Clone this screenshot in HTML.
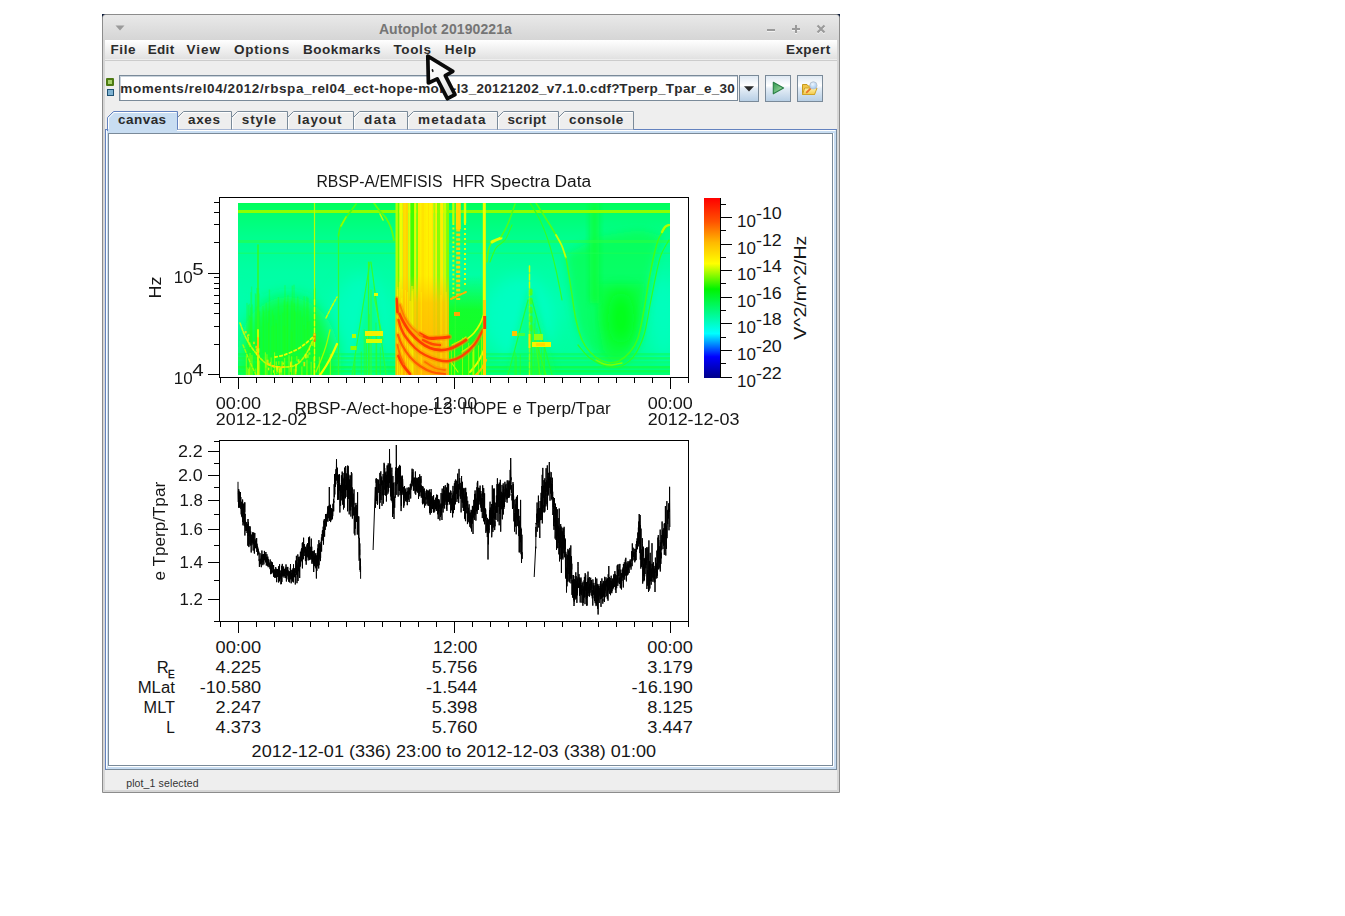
<!DOCTYPE html>
<html><head><meta charset="utf-8"><title>Autoplot 20190221a</title>
<style>
html,body{margin:0;padding:0;background:#fff;}
body{width:1345px;height:916px;position:relative;overflow:hidden;font-family:"Liberation Sans",sans-serif;}
.a{position:absolute;}
.t{position:absolute;white-space:pre;line-height:20px;height:20px;font-family:"Liberation Sans",sans-serif;}
.btn{position:absolute;box-sizing:border-box;border:1px solid #7a8a99;background:linear-gradient(#dfe9f3 0%,#ffffff 38%,#e4edf6 50%,#b8cfe5 100%);}
svg{position:absolute;left:0;top:0;overflow:visible;}
svg text{font-family:"Liberation Sans",sans-serif;}
</style></head><body>

<div class="a" style="left:102px;top:14px;width:4px;height:4px;background:#0a1a3a"></div>
<div class="a" style="left:836px;top:14px;width:4px;height:4px;background:#0a1a3a"></div>
<div class="a" style="left:102px;top:14px;width:738px;height:779px;box-sizing:border-box;border:1px solid #8c8c8c;border-radius:4px 4px 0 0;background:#d6d6d6"></div>
<div class="a" style="left:103px;top:15px;width:736px;height:25px;border-radius:3px 3px 0 0;background:linear-gradient(#e9e9e9,#d5d5d5)"></div>
<div class="a" style="left:105px;top:40px;width:732px;height:750px;background:#eeeeee"></div>
<div class="a" style="left:105px;top:40px;width:732px;height:19px;background:linear-gradient(#ffffff,#e1e1e1)"></div>
<div class="a" style="left:105px;top:60px;width:732px;height:1px;background:#cccccc"></div>
<svg width="1345" height="916" viewBox="0 0 1345 916">
<path d="M115.5 25.5 h9 l-4.5 5z" fill="#9a9a9a"/>
<path d="M116 31 l4.5 0.8 l4.5 -0.8" fill="none" stroke="#f4f4f4" stroke-width="1" opacity="0.0"/>
<g stroke="#f2f2f2" stroke-width="2" fill="none" transform="translate(0,1)"><path d="M767 30h8"/><path d="M792 29h8M796 25v8"/><path d="M817.5 25.5l7 7M824.5 25.5l-7 7"/></g>
<g stroke="#9a9a9a" stroke-width="2" fill="none"><path d="M767 30h8"/><path d="M792 29h8M796 25v8"/><path d="M817.5 25.5l7 7M824.5 25.5l-7 7" stroke-width="2.2"/></g>
</svg>
<div class="t" style="left:378.90px;top:19.37px;font-size:14.00px;letter-spacing:0.083px;font-weight:bold;color:#757575;">Autoplot 20190221a</div>
<div class="t" style="left:110.50px;top:39.54px;font-size:13.50px;letter-spacing:0.587px;font-weight:bold;color:#2b2b2b;">File</div>
<div class="t" style="left:147.70px;top:39.54px;font-size:13.50px;letter-spacing:0.326px;font-weight:bold;color:#2b2b2b;">Edit</div>
<div class="t" style="left:186.40px;top:39.54px;font-size:13.50px;letter-spacing:0.996px;font-weight:bold;color:#2b2b2b;">View</div>
<div class="t" style="left:234.00px;top:39.54px;font-size:13.50px;letter-spacing:0.715px;font-weight:bold;color:#2b2b2b;">Options</div>
<div class="t" style="left:303.10px;top:39.54px;font-size:13.50px;letter-spacing:0.474px;font-weight:bold;color:#2b2b2b;">Bookmarks</div>
<div class="t" style="left:393.50px;top:39.54px;font-size:13.50px;letter-spacing:0.621px;font-weight:bold;color:#2b2b2b;">Tools</div>
<div class="t" style="left:444.80px;top:39.54px;font-size:13.50px;letter-spacing:0.687px;font-weight:bold;color:#2b2b2b;">Help</div>
<div class="t" style="left:786.00px;top:39.54px;font-size:13.50px;letter-spacing:0.431px;font-weight:bold;color:#2b2b2b;">Expert</div>
<div class="a" style="left:106px;top:78px;width:8px;height:8px;box-sizing:border-box;border:2px solid #4d7a12;background:#a6d16a;border-radius:1px"></div>
<div class="a" style="left:107px;top:89px;width:7px;height:7px;box-sizing:border-box;border:1px solid #1f5274;background:#7fb2d2"></div>
<div class="a" style="left:119px;top:75px;width:619px;height:26px;box-sizing:border-box;border:1px solid #7a8a99;background:#fff;box-shadow:inset 1px 1px 0 #c9d3dc"></div>
<div class="t" style="left:120.30px;top:78.54px;font-size:13.50px;letter-spacing:0.588px;font-weight:bold;color:#2b2b2b;">moments/rel04/2012/rbspa_</div>
<div class="t" style="left:311.70px;top:78.54px;font-size:13.50px;letter-spacing:0.445px;font-weight:bold;color:#2b2b2b;">rel04_ect-hope-mom-l3_</div>
<div class="t" style="left:476.50px;top:78.54px;font-size:13.50px;letter-spacing:0.298px;font-weight:bold;color:#2b2b2b;">20121202_v7.1.0.cdf?</div>
<div class="t" style="left:619.30px;top:78.54px;font-size:13.50px;letter-spacing:0.260px;font-weight:bold;color:#2b2b2b;">Tperp_Tpar_e_30</div>
<div class="btn" style="left:739px;top:75px;width:20px;height:27px"></div>
<div class="btn" style="left:765px;top:75px;width:26px;height:27px"></div>
<div class="btn" style="left:797px;top:75px;width:26px;height:27px"></div>
<svg width="1345" height="916" viewBox="0 0 1345 916">
<defs><linearGradient id="gplay" x1="0" y1="0" x2="1" y2="1"><stop offset="0" stop-color="#2f9a4f"/><stop offset="1" stop-color="#b5e3b0"/></linearGradient><linearGradient id="gfold" x1="0" y1="0" x2="0" y2="1"><stop offset="0" stop-color="#fff3a8"/><stop offset="1" stop-color="#f3c94a"/></linearGradient><radialGradient id="glens" cx="0.4" cy="0.35" r="0.7"><stop offset="0" stop-color="#eef6ff"/><stop offset="1" stop-color="#9cc6ee"/></radialGradient></defs>
<path d="M744 86.3h10l-5 5.2z" fill="#2a2a2a"/>
<path d="M773.3 82.3 L783.6 88 L773.3 93.8z" fill="url(#gplay)" stroke="#2a8046" stroke-width="1.1" stroke-linejoin="round"/>
<path d="M802.5 84.5h4.5l1.2 1.5h6.3v8.5h-12z" fill="#f1c64a" stroke="#c79a1c" stroke-width="1"/>
<path d="M802.5 94.5l2.2-6.5h12.3l-2.4 6.5z" fill="url(#gfold)" stroke="#cfa326" stroke-width="1"/>
<path d="M811.3 87.8l-4.6 4.6" stroke="#e8742a" stroke-width="1.8" stroke-linecap="round"/>
<circle cx="813.4" cy="85.4" r="3.6" fill="url(#glens)" stroke="#b8c4d2" stroke-width="1"/>
</svg>
<svg width="1345" height="916" viewBox="0 0 1345 916">
<rect x="105.5" y="129.5" width="731" height="640" fill="#c8ddf2" stroke="#6382bf"/>
<path d="M106.5 769.5 H836.5 V130" fill="none" stroke="#7a8a99"/>
<path d="M106.5 768.5 V130.5 H835.5" fill="none" stroke="#ffffff"/>
<rect x="108.5" y="133.5" width="724" height="632" fill="#ffffff" stroke="#7a8a99"/>
<path d="M109.5 765 V134.5 H832" fill="none" stroke="#ffffff" opacity="0"/>
<path d="M108 766.5 H833.5 V133" fill="none" stroke="#ffffff"/>
<path d="M177.5 129.5 V117.5 L183.5 111.5 H231.5 V129.5" fill="#eeeeee" stroke="#7a8a99"/>
<path d="M178.5 129 V118 L184 112.5 H230.5" fill="none" stroke="#ffffff" opacity="0.9"/>
<path d="M231.5 129.5 V117.5 L237.5 111.5 H287.5 V129.5" fill="#eeeeee" stroke="#7a8a99"/>
<path d="M232.5 129 V118 L238 112.5 H286.5" fill="none" stroke="#ffffff" opacity="0.9"/>
<path d="M287.5 129.5 V117.5 L293.5 111.5 H353.5 V129.5" fill="#eeeeee" stroke="#7a8a99"/>
<path d="M288.5 129 V118 L294 112.5 H352.5" fill="none" stroke="#ffffff" opacity="0.9"/>
<path d="M353.5 129.5 V117.5 L359.5 111.5 H407.5 V129.5" fill="#eeeeee" stroke="#7a8a99"/>
<path d="M354.5 129 V118 L360 112.5 H406.5" fill="none" stroke="#ffffff" opacity="0.9"/>
<path d="M407.5 129.5 V117.5 L413.5 111.5 H497.5 V129.5" fill="#eeeeee" stroke="#7a8a99"/>
<path d="M408.5 129 V118 L414 112.5 H496.5" fill="none" stroke="#ffffff" opacity="0.9"/>
<path d="M497.5 129.5 V117.5 L503.5 111.5 H558.5 V129.5" fill="#eeeeee" stroke="#7a8a99"/>
<path d="M498.5 129 V118 L504 112.5 H557.5" fill="none" stroke="#ffffff" opacity="0.9"/>
<path d="M558.5 129.5 V117.5 L564.5 111.5 H633.5 V129.5" fill="#eeeeee" stroke="#7a8a99"/>
<path d="M559.5 129 V118 L565 112.5 H632.5" fill="none" stroke="#ffffff" opacity="0.9"/>
<path d="M107.5 131 V117.5 L113.5 111.5 H177.5 V129.5" fill="#c8ddf2" stroke="#6382bf"/>
<path d="M108.5 131 V118 L114 112.5 H176.5" fill="none" stroke="#ffffff"/>
<rect x="108" y="129" width="69" height="3" fill="#c8ddf2"/>
</svg>
<div class="t" style="left:118.00px;top:110.14px;font-size:13.50px;letter-spacing:0.469px;font-weight:bold;color:#2b2b2b;">canvas</div>
<div class="t" style="left:188.10px;top:110.14px;font-size:13.50px;letter-spacing:0.592px;font-weight:bold;color:#2b2b2b;">axes</div>
<div class="t" style="left:241.80px;top:110.14px;font-size:13.50px;letter-spacing:0.886px;font-weight:bold;color:#2b2b2b;">style</div>
<div class="t" style="left:297.40px;top:110.14px;font-size:13.50px;letter-spacing:0.891px;font-weight:bold;color:#2b2b2b;">layout</div>
<div class="t" style="left:364.10px;top:110.14px;font-size:13.50px;letter-spacing:1.286px;font-weight:bold;color:#2b2b2b;">data</div>
<div class="t" style="left:418.10px;top:110.14px;font-size:13.50px;letter-spacing:1.166px;font-weight:bold;color:#2b2b2b;">metadata</div>
<div class="t" style="left:507.40px;top:110.14px;font-size:13.50px;letter-spacing:0.390px;font-weight:bold;color:#2b2b2b;">script</div>
<div class="t" style="left:569.10px;top:110.14px;font-size:13.50px;letter-spacing:0.541px;font-weight:bold;color:#2b2b2b;">console</div>
<div class="t" style="left:126.20px;top:772.53px;font-size:10.50px;letter-spacing:0.124px;font-weight:normal;color:#333;">plot_1 selected</div>
<svg width="1345" height="916" viewBox="0 0 1345 916">
<defs>
<clipPath id="spc"><rect x="238" y="203" width="432" height="172"/></clipPath>
<clipPath id="band2c"><rect x="395.5" y="203" width="90" height="172"/></clipPath>
<filter id="b8" x="-50%" y="-50%" width="200%" height="200%"><feGaussianBlur stdDeviation="8"/></filter>
<filter id="b5" x="-50%" y="-50%" width="200%" height="200%"><feGaussianBlur stdDeviation="5"/></filter>
<filter id="b3" x="-50%" y="-50%" width="200%" height="200%"><feGaussianBlur stdDeviation="3"/></filter>
<filter id="b1" x="-50%" y="-50%" width="200%" height="200%"><feGaussianBlur stdDeviation="0.6"/></filter>
<linearGradient id="spbg" x1="0" y1="203" x2="0" y2="375" gradientUnits="userSpaceOnUse"><stop offset="0" stop-color="#00ff58"/><stop offset="0.07" stop-color="#00ff74"/><stop offset="0.2" stop-color="#00ff8e"/><stop offset="0.4" stop-color="#00ffa4"/><stop offset="0.6" stop-color="#00ffac"/><stop offset="0.86" stop-color="#00ffa0"/><stop offset="1" stop-color="#00ff74"/></linearGradient>
<linearGradient id="bandv" x1="0" y1="203" x2="0" y2="375" gradientUnits="userSpaceOnUse"><stop offset="0" stop-color="#ffc800" stop-opacity="0"/><stop offset="0.42" stop-color="#ffc800" stop-opacity="0.04"/><stop offset="0.58" stop-color="#ffc000" stop-opacity="0.75"/><stop offset="1" stop-color="#ffb000" stop-opacity="0.9"/></linearGradient>
<linearGradient id="gzone" x1="0" y1="203" x2="0" y2="375" gradientUnits="userSpaceOnUse"><stop offset="0" stop-color="#14ff20" stop-opacity="0"/><stop offset="0.42" stop-color="#14ff20" stop-opacity="0"/><stop offset="0.62" stop-color="#14ff20" stop-opacity="0.9"/><stop offset="1" stop-color="#18ff18" stop-opacity="1"/></linearGradient>
</defs>
<g clip-path="url(#spc)">
<rect x="238" y="203" width="432" height="172" fill="url(#spbg)"/>
<g filter="url(#b8)">
<ellipse cx="362" cy="325" rx="30" ry="50" fill="#00ffc0" opacity="0.9"/>
<ellipse cx="520" cy="318" rx="36" ry="42" fill="#00ffc4" opacity="0.9"/>
<ellipse cx="664" cy="318" rx="14" ry="42" fill="#00ffc0" opacity="0.9"/>
<ellipse cx="238" cy="325" rx="8" ry="38" fill="#00ffb0" opacity="0.7"/>
<ellipse cx="288" cy="355" rx="50" ry="58" fill="#10ff28" opacity="0.8"/>
<ellipse cx="330" cy="365" rx="12" ry="30" fill="#10ff30" opacity="0.5"/>
</g>
<path d="M566 255 L571 295 L577 325 L586 347 L600 360 L612 364 L624 362 L634 352 L641 335 L646 310 L650 282 L656 255 L662 236 L640 230 L600 236Z" fill="#0cff3c" opacity="0.6" filter="url(#b5)"/>
<path d="M596 284 L598 320 L603 350 L612 362 L624 360 L633 348 L639 325 L643 300 L645 284Z" fill="#08ff28" opacity="0.5" filter="url(#b5)"/>
<ellipse cx="621" cy="318" rx="13" ry="27" fill="#04ff0c" opacity="0.85" filter="url(#b8)"/>
<rect x="590" y="203" width="9" height="100" fill="#0cff38" opacity="0.85" filter="url(#b3)"/>
<rect x="268.7" y="289.5" width="1.4" height="85.5" fill="#20ff18" opacity="0.3"/>
<rect x="291.6" y="285.6" width="1.4" height="89.4" fill="#20ff18" opacity="0.3"/>
<rect x="283.5" y="300.3" width="1.4" height="74.7" fill="#20ff18" opacity="0.3"/>
<rect x="250.1" y="307.4" width="1.4" height="67.6" fill="#20ff18" opacity="0.3"/>
<rect x="248.6" y="303.7" width="1.4" height="71.3" fill="#20ff18" opacity="0.3"/>
<rect x="250.9" y="286.5" width="1.4" height="88.5" fill="#20ff18" opacity="0.3"/>
<rect x="275.7" y="323.3" width="1.4" height="51.7" fill="#20ff18" opacity="0.3"/>
<rect x="254.7" y="293.2" width="1.4" height="81.8" fill="#20ff18" opacity="0.3"/>
<rect x="289.9" y="329.4" width="1.4" height="45.6" fill="#20ff18" opacity="0.3"/>
<rect x="286.4" y="301.8" width="1.4" height="73.2" fill="#20ff18" opacity="0.3"/>
<rect x="314.3" y="284.3" width="1.4" height="90.7" fill="#20ff18" opacity="0.3"/>
<rect x="306.1" y="296.5" width="1.4" height="78.5" fill="#20ff18" opacity="0.3"/>
<rect x="256.1" y="287.9" width="1.4" height="87.1" fill="#20ff18" opacity="0.3"/>
<rect x="267.6" y="322.8" width="1.4" height="52.2" fill="#20ff18" opacity="0.3"/>
<rect x="258.7" y="311.1" width="1.4" height="63.9" fill="#20ff18" opacity="0.3"/>
<rect x="290.7" y="300.6" width="1.4" height="74.4" fill="#20ff18" opacity="0.3"/>
<rect x="284.3" y="285.1" width="1.4" height="89.9" fill="#20ff18" opacity="0.3"/>
<rect x="250.2" y="292.3" width="1.4" height="82.7" fill="#20ff18" opacity="0.3"/>
<rect x="293.6" y="303.4" width="1.4" height="71.6" fill="#20ff18" opacity="0.3"/>
<rect x="268.0" y="311.3" width="1.4" height="63.7" fill="#20ff18" opacity="0.3"/>
<rect x="277.7" y="297.0" width="1.4" height="78.0" fill="#20ff18" opacity="0.3"/>
<rect x="301.6" y="316.9" width="1.4" height="58.1" fill="#20ff18" opacity="0.3"/>
<rect x="263.1" y="310.7" width="1.4" height="64.3" fill="#20ff18" opacity="0.3"/>
<rect x="282.8" y="325.8" width="1.4" height="49.2" fill="#20ff18" opacity="0.3"/>
<rect x="297.1" y="296.4" width="1.4" height="78.6" fill="#20ff18" opacity="0.3"/>
<rect x="314.6" y="287.9" width="1.4" height="87.1" fill="#20ff18" opacity="0.3"/>
<rect x="275.3" y="319.9" width="1.4" height="55.1" fill="#20ff18" opacity="0.3"/>
<rect x="256.6" y="306.4" width="1.4" height="68.6" fill="#20ff18" opacity="0.3"/>
<rect x="248.7" y="315.4" width="1.4" height="59.6" fill="#20ff18" opacity="0.3"/>
<rect x="299.5" y="310.7" width="1.4" height="64.3" fill="#20ff18" opacity="0.3"/>
<rect x="307.3" y="297.7" width="1.4" height="77.3" fill="#20ff18" opacity="0.3"/>
<rect x="294.7" y="311.7" width="1.4" height="63.3" fill="#20ff18" opacity="0.3"/>
<rect x="286.6" y="304.8" width="1.4" height="70.2" fill="#20ff18" opacity="0.3"/>
<rect x="304.8" y="329.2" width="1.4" height="45.8" fill="#20ff18" opacity="0.3"/>
<rect x="279.2" y="315.2" width="1.4" height="59.8" fill="#20ff18" opacity="0.3"/>
<rect x="250.2" y="317.1" width="1.4" height="57.9" fill="#20ff18" opacity="0.3"/>
<rect x="291.3" y="331.7" width="1.4" height="43.3" fill="#20ff18" opacity="0.3"/>
<rect x="303.5" y="296.2" width="1.4" height="78.8" fill="#20ff18" opacity="0.3"/>
<rect x="273.0" y="315.4" width="1.4" height="59.6" fill="#20ff18" opacity="0.3"/>
<rect x="247.6" y="305.1" width="1.4" height="69.9" fill="#20ff18" opacity="0.3"/>
<rect x="257.8" y="287.9" width="1.4" height="87.1" fill="#20ff18" opacity="0.3"/>
<rect x="250.1" y="320.4" width="1.4" height="54.6" fill="#20ff18" opacity="0.3"/>
<rect x="255.1" y="294.4" width="1.4" height="80.6" fill="#20ff18" opacity="0.3"/>
<rect x="273.4" y="325.6" width="1.4" height="49.4" fill="#20ff18" opacity="0.3"/>
<rect x="251.6" y="304.5" width="1.4" height="70.5" fill="#20ff18" opacity="0.3"/>
<rect x="284.5" y="326.2" width="1.4" height="48.8" fill="#20ff18" opacity="0.3"/>
<rect x="303.3" y="325.2" width="1.4" height="49.8" fill="#20ff18" opacity="0.3"/>
<rect x="265.5" y="302.8" width="1.4" height="72.2" fill="#20ff18" opacity="0.3"/>
<rect x="271.1" y="326.2" width="1.4" height="48.8" fill="#20ff18" opacity="0.3"/>
<rect x="313.0" y="289.5" width="1.4" height="85.5" fill="#20ff18" opacity="0.3"/>
<rect x="258.3" y="293.6" width="1.4" height="81.4" fill="#20ff18" opacity="0.3"/>
<rect x="262.3" y="306.2" width="1.4" height="68.8" fill="#20ff18" opacity="0.3"/>
<rect x="287.2" y="295.1" width="1.4" height="79.9" fill="#20ff18" opacity="0.3"/>
<rect x="246.3" y="302.9" width="1.4" height="72.1" fill="#20ff18" opacity="0.3"/>
<rect x="271.8" y="310.3" width="1.4" height="64.7" fill="#20ff18" opacity="0.3"/>
<rect x="312.7" y="316.5" width="1.4" height="58.5" fill="#20ff18" opacity="0.3"/>
<rect x="282.1" y="312.9" width="1.4" height="62.1" fill="#20ff18" opacity="0.3"/>
<rect x="293.3" y="284.7" width="1.4" height="90.3" fill="#20ff18" opacity="0.3"/>
<rect x="309.0" y="321.0" width="1.4" height="54.0" fill="#20ff18" opacity="0.3"/>
<rect x="307.2" y="321.9" width="1.4" height="53.1" fill="#20ff18" opacity="0.3"/>
<rect x="238" y="353" width="432" height="2.5" fill="#10ff40" opacity="0.45"/>
<rect x="238" y="357" width="432" height="2.5" fill="#20ff30" opacity="0.45"/>
<rect x="238" y="361" width="432" height="2.5" fill="#10ff50" opacity="0.35"/>
<rect x="238" y="366" width="432" height="2.5" fill="#18ff28" opacity="0.55"/>
<rect x="238" y="370" width="432" height="2.5" fill="#10ff30" opacity="0.55"/>
<rect x="238" y="210" width="432" height="3" fill="#8cff00"/>
<rect x="238" y="240" width="432" height="3" fill="#2cff40" opacity="0.55"/>
<rect x="238" y="252.5" width="432" height="1.5" fill="#20ff50" opacity="0.45"/>
<g fill="none" stroke-linecap="round">
<path d="M258 245V375" stroke="#30ff20" stroke-width="1.5"/>
<path d="M338.5 233V375" stroke="#30ff30" stroke-width="1.2"/>
<path d="M368.5 262V375" stroke="#40ff20" stroke-width="1.2"/>
<path d="M371 290V375" stroke="#50ff20" stroke-width="1"/>
<path d="M314.5 203V300" stroke="#b8ff00" stroke-width="1.2"/>
<path d="M314.5 300V375" stroke="#e0ff00" stroke-width="1.4" stroke-dasharray="5 2"/>
<path d="M314.5 334v7" stroke="#ff7a00" stroke-width="2.2"/>
<path d="M258 330V375" stroke="#d8ff00" stroke-width="1.8"/>
<path d="M258 338V356" stroke="#ffc000" stroke-width="2"/>
<path d="M240.0 323.0 C241.0 325.5 243.5 333.2 246.0 338.0 C248.5 342.8 251.5 347.7 255.0 352.0 C258.5 356.3 262.7 361.5 267.0 364.0 C271.3 366.5 276.2 366.8 281.0 367.0 C285.8 367.2 291.8 367.2 296.0 365.0 C300.2 362.8 303.0 358.5 306.0 354.0 C309.0 349.5 312.7 340.7 314.0 338.0" stroke="#d0ff00" stroke-width="1.6" stroke-dasharray="3 1.6" opacity="0.9"/>
<path d="M275.0 357.0 C276.5 356.7 280.5 356.2 284.0 355.0 C287.5 353.8 292.5 351.8 296.0 350.0 C299.5 348.2 302.2 346.2 305.0 344.0 C307.8 341.8 311.7 338.2 313.0 337.0" stroke="#e8ff00" stroke-width="1.8" stroke-dasharray="2.5 2.5"/>
<path d="M243.0 345.0 C244.2 347.8 247.8 357.0 250.0 362.0 C252.2 367.0 255.0 372.8 256.0 375.0" stroke="#a0ff00" stroke-width="1.4" stroke-dasharray="3 2"/>
<path d="M268.0 364.0 C269.3 364.5 273.3 366.5 276.0 367.0 C278.7 367.5 282.7 367.0 284.0 367.0" stroke="#ffd800" stroke-width="2.2" stroke-dasharray="2 3"/>
</g>
<rect x="269.8" y="361.9" width="1.1" height="2.2" fill="#ffe000" opacity="0.8"/>
<rect x="255.9" y="351.5" width="1.1" height="3.8" fill="#f0ff00" opacity="0.8"/>
<rect x="247.8" y="333.9" width="1.7" height="2.2" fill="#b0ff00" opacity="0.8"/>
<rect x="255.8" y="348.3" width="1.2" height="2.8" fill="#ffe000" opacity="0.8"/>
<rect x="266.4" y="359.7" width="2.2" height="3.4" fill="#ffe000" opacity="0.8"/>
<rect x="276.8" y="367.9" width="1.2" height="4.2" fill="#d8ff00" opacity="0.8"/>
<rect x="296.3" y="356.0" width="1.0" height="4.9" fill="#90ff00" opacity="0.8"/>
<rect x="280.1" y="367.7" width="1.8" height="4.7" fill="#f0ff00" opacity="0.8"/>
<rect x="297.6" y="359.3" width="1.8" height="2.8" fill="#d8ff00" opacity="0.8"/>
<rect x="267.9" y="367.6" width="1.4" height="2.7" fill="#f0ff00" opacity="0.8"/>
<rect x="281.2" y="361.3" width="2.0" height="5.0" fill="#90ff00" opacity="0.8"/>
<rect x="304.8" y="354.2" width="2.0" height="4.2" fill="#f0ff00" opacity="0.8"/>
<rect x="257.2" y="348.3" width="2.2" height="4.4" fill="#d8ff00" opacity="0.8"/>
<rect x="275.9" y="365.7" width="1.8" height="4.9" fill="#f0ff00" opacity="0.8"/>
<rect x="274.0" y="373.0" width="1.1" height="2.3" fill="#b0ff00" opacity="0.8"/>
<rect x="275.7" y="361.5" width="1.2" height="3.9" fill="#b0ff00" opacity="0.8"/>
<rect x="308.4" y="352.4" width="2.0" height="2.3" fill="#b0ff00" opacity="0.8"/>
<rect x="290.2" y="361.5" width="1.9" height="4.3" fill="#ffe000" opacity="0.8"/>
<rect x="276.3" y="369.3" width="1.1" height="4.8" fill="#b0ff00" opacity="0.8"/>
<rect x="294.9" y="369.3" width="1.5" height="4.8" fill="#ffe000" opacity="0.8"/>
<rect x="295.1" y="363.8" width="1.7" height="3.4" fill="#f0ff00" opacity="0.8"/>
<rect x="289.8" y="367.3" width="2.0" height="4.9" fill="#90ff00" opacity="0.8"/>
<rect x="290.0" y="362.5" width="1.0" height="4.4" fill="#f0ff00" opacity="0.8"/>
<rect x="295.2" y="366.8" width="1.6" height="4.8" fill="#d8ff00" opacity="0.8"/>
<rect x="273.0" y="370.2" width="1.0" height="2.6" fill="#f0ff00" opacity="0.8"/>
<rect x="278.1" y="361.2" width="1.4" height="3.6" fill="#90ff00" opacity="0.8"/>
<rect x="303.4" y="361.9" width="1.8" height="4.4" fill="#ffe000" opacity="0.8"/>
<rect x="279.3" y="369.3" width="1.2" height="2.5" fill="#90ff00" opacity="0.8"/>
<rect x="278.8" y="371.6" width="1.0" height="4.4" fill="#90ff00" opacity="0.8"/>
<rect x="253.1" y="341.7" width="1.7" height="2.4" fill="#ffe000" opacity="0.8"/>
<rect x="244.7" y="331.0" width="1.9" height="2.3" fill="#ffe000" opacity="0.8"/>
<rect x="282.6" y="362.5" width="1.2" height="2.1" fill="#f0ff00" opacity="0.8"/>
<rect x="247.4" y="337.0" width="1.5" height="3.8" fill="#d8ff00" opacity="0.8"/>
<rect x="278.4" y="367.0" width="1.2" height="2.8" fill="#90ff00" opacity="0.8"/>
<rect x="278.6" y="368.4" width="1.8" height="4.6" fill="#f0ff00" opacity="0.8"/>
<rect x="311.6" y="341.2" width="2.1" height="4.7" fill="#b0ff00" opacity="0.8"/>
<rect x="255.4" y="345.8" width="1.5" height="2.2" fill="#ffe000" opacity="0.8"/>
<rect x="258.3" y="354.6" width="1.3" height="2.9" fill="#d8ff00" opacity="0.8"/>
<rect x="249.3" y="342.5" width="1.2" height="4.6" fill="#b0ff00" opacity="0.8"/>
<rect x="313.5" y="333.4" width="1.9" height="2.3" fill="#f0ff00" opacity="0.8"/>
<rect x="307.3" y="354.5" width="1.2" height="3.3" fill="#f0ff00" opacity="0.8"/>
<rect x="279.2" y="371.9" width="1.5" height="3.1" fill="#b0ff00" opacity="0.8"/>
<rect x="247.0" y="334.7" width="1.5" height="2.1" fill="#ffe000" opacity="0.8"/>
<rect x="265.2" y="362.8" width="1.4" height="4.9" fill="#90ff00" opacity="0.8"/>
<rect x="248.6" y="342.3" width="1.1" height="2.8" fill="#d8ff00" opacity="0.8"/>
<rect x="308.8" y="348.0" width="1.3" height="2.4" fill="#f0ff00" opacity="0.8"/>
<rect x="281.1" y="368.4" width="1.1" height="6.6" fill="#c0ff00" opacity="0.6"/>
<rect x="318.8" y="356.7" width="1.1" height="18.3" fill="#c0ff00" opacity="0.6"/>
<rect x="255.2" y="368.5" width="1.1" height="6.5" fill="#c0ff00" opacity="0.6"/>
<rect x="295.2" y="364.6" width="1.1" height="10.4" fill="#c0ff00" opacity="0.6"/>
<rect x="249.5" y="353.0" width="1.1" height="22.0" fill="#c0ff00" opacity="0.6"/>
<rect x="306.4" y="359.7" width="1.1" height="15.3" fill="#c0ff00" opacity="0.6"/>
<rect x="247.9" y="368.9" width="1.1" height="6.1" fill="#c0ff00" opacity="0.6"/>
<rect x="301.3" y="366.4" width="1.1" height="8.6" fill="#c0ff00" opacity="0.6"/>
<rect x="249.0" y="367.4" width="1.1" height="7.6" fill="#c0ff00" opacity="0.6"/>
<rect x="247.3" y="367.5" width="1.1" height="7.5" fill="#c0ff00" opacity="0.6"/>
<rect x="284.1" y="358.1" width="1.1" height="16.9" fill="#c0ff00" opacity="0.6"/>
<rect x="293.5" y="368.7" width="1.1" height="6.3" fill="#c0ff00" opacity="0.6"/>
<rect x="266.4" y="354.3" width="1.1" height="20.7" fill="#c0ff00" opacity="0.6"/>
<rect x="291.1" y="356.3" width="1.1" height="18.7" fill="#c0ff00" opacity="0.6"/>
<rect x="251.4" y="354.9" width="1.1" height="20.1" fill="#c0ff00" opacity="0.6"/>
<rect x="245.8" y="355.6" width="1.1" height="19.4" fill="#c0ff00" opacity="0.6"/>
<rect x="270.6" y="357.5" width="1.1" height="17.5" fill="#c0ff00" opacity="0.6"/>
<rect x="313.2" y="357.2" width="1.1" height="17.8" fill="#c0ff00" opacity="0.6"/>
<rect x="288.5" y="355.2" width="1.1" height="19.8" fill="#c0ff00" opacity="0.6"/>
<rect x="274.0" y="352.3" width="1.1" height="22.7" fill="#c0ff00" opacity="0.6"/>
<rect x="264.8" y="352.3" width="1.1" height="22.7" fill="#c0ff00" opacity="0.6"/>
<rect x="310.6" y="361.9" width="1.1" height="13.1" fill="#c0ff00" opacity="0.6"/>
<rect x="259.0" y="360.5" width="1.1" height="14.5" fill="#c0ff00" opacity="0.6"/>
<rect x="329.8" y="353.9" width="1.1" height="21.1" fill="#c0ff00" opacity="0.6"/>
<g fill="none" stroke-linecap="round">
<path d="M320.0 375.0 C321.0 373.5 324.0 369.3 326.0 366.0 C328.0 362.7 330.2 358.7 332.0 355.0 C333.8 351.3 336.2 345.8 337.0 344.0" stroke="#f0ff00" stroke-width="2.2"/>
<path d="M326.0 318.0 C326.8 316.3 329.2 311.5 331.0 308.0 C332.8 304.5 336.0 298.8 337.0 297.0" stroke="#c8ff00" stroke-width="1.5" stroke-dasharray="3 1.5"/>
<path d="M316.0 372.0 C316.8 370.0 319.3 364.3 321.0 360.0 C322.7 355.7 324.5 351.0 326.0 346.0 C327.5 341.0 329.3 332.7 330.0 330.0" stroke="#a0ff00" stroke-width="1.3"/>
<path d="M338.5 236.0 C338.8 234.7 338.9 230.8 340.0 228.0 C341.1 225.2 343.2 221.8 345.0 219.0 C346.8 216.2 349.2 213.5 351.0 211.0 C352.8 208.5 355.2 205.2 356.0 204.0" stroke="#48ff18" stroke-width="1.6"/>
<path d="M374.0 203.0 C374.8 204.2 377.0 207.5 379.0 210.0 C381.0 212.5 384.0 215.0 386.0 218.0 C388.0 221.0 389.7 224.3 391.0 228.0 C392.3 231.7 393.5 238.0 394.0 240.0" stroke="#60ff10" stroke-width="1.8"/>
<path d="M380.0 214.0 L383.0 220.0" stroke="#c0ff00" stroke-width="1.6"/>
<path d="M341.0 226.0 L346.0 217.0" stroke="#90ff00" stroke-width="1.6"/>
<path d="M370 262 L352 375" stroke="#30ff30" stroke-width="1.2"/>
<path d="M371 262 L386 375" stroke="#30ff30" stroke-width="1.2"/>
<path d="M374 296 L383 340" stroke="#50ff20" stroke-width="1.2"/>
</g>
<path d="M369 285 L360 330 L349 375 H389 L380 330 L373 285z" fill="#0cff58" opacity="0.4" filter="url(#b3)"/>
<rect x="379.8" y="347.3" width="1.2" height="27.7" fill="#38ff18" opacity="0.5"/>
<rect x="368.8" y="314.2" width="1.2" height="60.8" fill="#38ff18" opacity="0.5"/>
<rect x="365.4" y="333.4" width="1.2" height="41.6" fill="#38ff18" opacity="0.5"/>
<rect x="375.4" y="322.6" width="1.2" height="52.4" fill="#38ff18" opacity="0.5"/>
<rect x="363.7" y="329.4" width="1.2" height="45.6" fill="#38ff18" opacity="0.5"/>
<rect x="376.0" y="333.4" width="1.2" height="41.6" fill="#38ff18" opacity="0.5"/>
<rect x="365.8" y="336.9" width="1.2" height="38.1" fill="#38ff18" opacity="0.5"/>
<rect x="353.8" y="364.5" width="1.2" height="10.5" fill="#38ff18" opacity="0.5"/>
<rect x="354.4" y="357.3" width="1.2" height="17.7" fill="#38ff18" opacity="0.5"/>
<rect x="360.7" y="351.5" width="1.2" height="23.5" fill="#38ff18" opacity="0.5"/>
<rect x="365" y="331" width="18" height="5" fill="#f4f000"/><rect x="366" y="339" width="16" height="4" fill="#d8ff00"/>
<rect x="374" y="293" width="4" height="3" fill="#e8ff00"/>
<rect x="352" y="334" width="4" height="4" fill="#b0ff00"/><rect x="350.5" y="346" width="6" height="4" fill="#90ff00"/>
<rect x="395.5" y="203" width="2.45" height="172" fill="#b4ff00"/>
<rect x="397.9" y="203" width="1.45" height="172" fill="#60ff00"/>
<rect x="399.3" y="203" width="3.55" height="172" fill="#f0ff00"/>
<rect x="402.8" y="203" width="5.45" height="172" fill="#ffd800"/>
<rect x="408.2" y="203" width="2.45" height="172" fill="#e4ff00"/>
<rect x="410.6" y="203" width="3.55" height="172" fill="#40ff00"/>
<rect x="414.1" y="203" width="2.45" height="172" fill="#e4ff00"/>
<rect x="416.5" y="203" width="1.55" height="172" fill="#78ff00"/>
<rect x="418" y="203" width="8.05" height="172" fill="#ffea00"/>
<rect x="426" y="203" width="7.75" height="172" fill="#fff200"/>
<rect x="433.7" y="203" width="1.55" height="172" fill="#a8ff00"/>
<rect x="435.2" y="203" width="2.05" height="172" fill="#fff000"/>
<rect x="437.2" y="203" width="2.95" height="172" fill="#88ff00"/>
<rect x="440.1" y="203" width="3.55" height="172" fill="#fff200"/>
<rect x="443.6" y="203" width="2.95" height="172" fill="#c8ff00"/>
<rect x="446.5" y="203" width="2.55" height="172" fill="#80ff00"/>
<rect x="404.5" y="203" width="1" height="172" fill="#ffe800" opacity="0.7"/>
<rect x="406.5" y="203" width="1" height="172" fill="#ffcc00" opacity="0.7"/>
<rect x="420.0" y="203" width="1" height="172" fill="#fff400" opacity="0.7"/>
<rect x="422.5" y="203" width="1" height="172" fill="#ffdc00" opacity="0.7"/>
<rect x="424.5" y="203" width="1" height="172" fill="#fff600" opacity="0.7"/>
<rect x="428.0" y="203" width="1" height="172" fill="#ffe000" opacity="0.7"/>
<rect x="430.5" y="203" width="1" height="172" fill="#fff800" opacity="0.7"/>
<rect x="432.0" y="203" width="1" height="172" fill="#ffe400" opacity="0.7"/>
<rect x="441.5" y="203" width="1" height="172" fill="#ffe800" opacity="0.7"/>
<rect x="395.5" y="203" width="53.5" height="172" fill="url(#bandv)"/>
<rect x="401.2" y="298" width="1.1" height="95" fill="#fff200" opacity="0.55"/>
<rect x="440.5" y="295" width="1.1" height="95" fill="#fff200" opacity="0.55"/>
<rect x="411.1" y="286" width="1.1" height="95" fill="#fff200" opacity="0.55"/>
<rect x="411.7" y="291" width="1.1" height="95" fill="#fff200" opacity="0.55"/>
<rect x="404.9" y="290" width="1.1" height="95" fill="#fff200" opacity="0.55"/>
<rect x="410.2" y="301" width="1.1" height="95" fill="#fff200" opacity="0.55"/>
<rect x="445.6" y="292" width="1.1" height="95" fill="#fff200" opacity="0.55"/>
<rect x="409.2" y="301" width="1.1" height="95" fill="#fff200" opacity="0.55"/>
<rect x="412.5" y="289" width="1.1" height="95" fill="#fff200" opacity="0.55"/>
<rect x="397.1" y="289" width="1.1" height="95" fill="#fff200" opacity="0.55"/>
<rect x="420.7" y="292" width="1.1" height="95" fill="#fff200" opacity="0.55"/>
<rect x="407.0" y="292" width="1.1" height="95" fill="#fff200" opacity="0.55"/>
<rect x="397.2" y="287" width="1.1" height="95" fill="#fff200" opacity="0.55"/>
<rect x="401.5" y="289" width="1.1" height="95" fill="#fff200" opacity="0.55"/>
<rect x="399.1" y="282" width="1.1" height="95" fill="#fff200" opacity="0.55"/>
<rect x="412.2" y="286" width="1.1" height="95" fill="#fff200" opacity="0.55"/>
<rect x="449" y="203" width="34" height="172" fill="url(#gzone)"/>
<rect x="455.8" y="203" width="5" height="26" fill="#ffd800"/>
<rect x="452.2" y="203" width="2.4" height="20" fill="#c0ff00"/>
<rect x="463.8" y="203" width="2.4" height="20" fill="#e0ff00"/>
<path d="M453.4 223V300" stroke="#e0ff00" stroke-width="2" stroke-dasharray="2 2.6"/>
<path d="M458.2 229V300" stroke="#ffd000" stroke-width="4" stroke-dasharray="2.6 2"/>
<path d="M465 223V285" stroke="#e8ff00" stroke-width="2" stroke-dasharray="2 3"/>
<path d="M455.2 203V375" stroke="#30ff30" stroke-width="0.8"/>
<g fill="none" stroke-linecap="round">
<path d="M451 299 L466 292" stroke="#ffb000" stroke-width="2" stroke-dasharray="3 1.5"/>
<rect x="454" y="312" width="6" height="4" fill="#ffa800" stroke="none"/>
<path d="M466.0 340.0 C467.3 338.8 471.7 335.7 474.0 333.0 C476.3 330.3 478.3 327.2 480.0 324.0 C481.7 320.8 483.3 315.7 484.0 314.0" stroke="#e0ff00" stroke-width="1.6"/>
<path d="M462.0 352.0 C463.7 350.8 469.0 347.7 472.0 345.0 C475.0 342.3 477.8 339.2 480.0 336.0 C482.2 332.8 484.2 327.7 485.0 326.0" stroke="#c0ff00" stroke-width="1.4"/>
<path d="M470.0 372.0 C471.3 370.3 475.7 365.7 478.0 362.0 C480.3 358.3 483.0 352.0 484.0 350.0" stroke="#e8ff00" stroke-width="2"/>
<path d="M476.0 375.0 C477.0 373.8 480.3 370.5 482.0 368.0 C483.7 365.5 485.3 361.3 486.0 360.0" stroke="#ffc000" stroke-width="2.2"/>
<path d="M452.0 345.0 C453.3 344.3 457.7 342.3 460.0 341.0 C462.3 339.7 465.0 337.7 466.0 337.0" stroke="#d0ff00" stroke-width="1.2"/>
<path d="M451.0 362.0 L458.0 372.0" stroke="#c0ff00" stroke-width="1.2"/>
<path d="M468.7 343.2V375" stroke="#b0ff00" stroke-width="1" opacity="0.7"/>
<path d="M474.0 346.4V375" stroke="#b0ff00" stroke-width="1" opacity="0.7"/>
<path d="M472.9 352.0V375" stroke="#b0ff00" stroke-width="1" opacity="0.7"/>
<path d="M462.5 338.2V375" stroke="#b0ff00" stroke-width="1" opacity="0.7"/>
<path d="M481.5 333.7V375" stroke="#b0ff00" stroke-width="1" opacity="0.7"/>
<path d="M473.2 346.1V375" stroke="#b0ff00" stroke-width="1" opacity="0.7"/>
<path d="M451.4 350.9V375" stroke="#b0ff00" stroke-width="1" opacity="0.7"/>
<path d="M478.5 345.7V375" stroke="#b0ff00" stroke-width="1" opacity="0.7"/>
<path d="M473.5 350.3V375" stroke="#b0ff00" stroke-width="1" opacity="0.7"/>
<path d="M454.5 343.1V375" stroke="#b0ff00" stroke-width="1" opacity="0.7"/>
</g>
<g fill="none" stroke-linecap="round" clip-path="url(#band2c)">
<path d="M396.5 299.0 L397.5 312.0" stroke="#ff8c00" stroke-width="5.8" opacity="0.45"/>
<path d="M399.5 314.0 C400.2 315.5 402.2 320.0 404.0 323.0 C405.8 326.0 407.3 328.8 410.0 332.0 C412.7 335.2 416.7 339.3 420.0 342.0 C423.3 344.7 426.7 346.7 430.0 348.0 C433.3 349.3 436.8 349.8 440.0 350.0 C443.2 350.2 446.0 349.8 449.0 349.0 C452.0 348.2 455.2 346.5 458.0 345.0 C460.8 343.5 464.7 340.8 466.0 340.0" stroke="#ff8c00" stroke-width="5.8" opacity="0.45"/>
<path d="M420.0 334.0 C421.3 334.7 425.0 337.3 428.0 338.0 C431.0 338.7 434.5 338.2 438.0 338.0 C441.5 337.8 447.2 337.2 449.0 337.0" stroke="#ff8c00" stroke-width="6.2" opacity="0.45"/>
<path d="M423.0 340.0 C424.5 340.7 429.2 343.2 432.0 344.0 C434.8 344.8 438.7 344.8 440.0 345.0" stroke="#ff8c00" stroke-width="5.4" opacity="0.45"/>
<path d="M398.5 320.0 C398.9 321.3 399.9 325.3 401.0 328.0 C402.1 330.7 402.7 332.7 405.0 336.0 C407.3 339.3 411.7 344.8 415.0 348.0 C418.3 351.2 421.2 353.0 425.0 355.0 C428.8 357.0 434.0 359.0 438.0 360.0 C442.0 361.0 445.0 361.7 449.0 361.0 C453.0 360.3 457.8 358.7 462.0 356.0 C466.2 353.3 470.5 349.3 474.0 345.0 C477.5 340.7 481.5 332.5 483.0 330.0" stroke="#ff8c00" stroke-width="5.4" opacity="0.45"/>
<path d="M398.0 335.0 C398.7 336.7 400.0 341.3 402.0 345.0 C404.0 348.7 407.0 353.5 410.0 357.0 C413.0 360.5 416.3 363.5 420.0 366.0 C423.7 368.5 427.8 370.7 432.0 372.0 C436.2 373.3 442.8 373.7 445.0 374.0" stroke="#ff8c00" stroke-width="5.2" opacity="0.45"/>
<path d="M398.5 356.0 C399.2 357.5 401.1 362.0 403.0 365.0 C404.9 368.0 408.8 372.5 410.0 374.0" stroke="#ff8c00" stroke-width="5.8" opacity="0.45"/>
<path d="M425.0 362.0 C426.7 363.0 431.7 366.7 435.0 368.0 C438.3 369.3 443.3 369.7 445.0 370.0" stroke="#ff8c00" stroke-width="4.8" opacity="0.45"/>
<path d="M400.0 305.0 C400.8 307.2 403.0 314.2 405.0 318.0 C407.0 321.8 409.2 325.0 412.0 328.0 C414.8 331.0 420.3 334.7 422.0 336.0" stroke="#ff8c00" stroke-width="4.8" opacity="0.45"/>
<path d="M397.5 345.0 C397.9 346.7 398.9 351.8 400.0 355.0 C401.1 358.2 403.3 362.5 404.0 364.0" stroke="#ff8c00" stroke-width="4.8" opacity="0.45"/>
<path d="M396.5 299.0 L397.5 312.0" stroke="#ff3800" stroke-width="2.8"/>
<path d="M399.5 314.0 C400.2 315.5 402.2 320.0 404.0 323.0 C405.8 326.0 407.3 328.8 410.0 332.0 C412.7 335.2 416.7 339.3 420.0 342.0 C423.3 344.7 426.7 346.7 430.0 348.0 C433.3 349.3 436.8 349.8 440.0 350.0 C443.2 350.2 446.0 349.8 449.0 349.0 C452.0 348.2 455.2 346.5 458.0 345.0 C460.8 343.5 464.7 340.8 466.0 340.0" stroke="#ff3c00" stroke-width="2.8"/>
<path d="M420.0 334.0 C421.3 334.7 425.0 337.3 428.0 338.0 C431.0 338.7 434.5 338.2 438.0 338.0 C441.5 337.8 447.2 337.2 449.0 337.0" stroke="#ff3c00" stroke-width="3.2"/>
<path d="M423.0 340.0 C424.5 340.7 429.2 343.2 432.0 344.0 C434.8 344.8 438.7 344.8 440.0 345.0" stroke="#ff4a00" stroke-width="2.4"/>
<path d="M398.5 320.0 C398.9 321.3 399.9 325.3 401.0 328.0 C402.1 330.7 402.7 332.7 405.0 336.0 C407.3 339.3 411.7 344.8 415.0 348.0 C418.3 351.2 421.2 353.0 425.0 355.0 C428.8 357.0 434.0 359.0 438.0 360.0 C442.0 361.0 445.0 361.7 449.0 361.0 C453.0 360.3 457.8 358.7 462.0 356.0 C466.2 353.3 470.5 349.3 474.0 345.0 C477.5 340.7 481.5 332.5 483.0 330.0" stroke="#ff4400" stroke-width="2.4"/>
<path d="M398.0 335.0 C398.7 336.7 400.0 341.3 402.0 345.0 C404.0 348.7 407.0 353.5 410.0 357.0 C413.0 360.5 416.3 363.5 420.0 366.0 C423.7 368.5 427.8 370.7 432.0 372.0 C436.2 373.3 442.8 373.7 445.0 374.0" stroke="#ff5a00" stroke-width="2.2"/>
<path d="M398.5 356.0 C399.2 357.5 401.1 362.0 403.0 365.0 C404.9 368.0 408.8 372.5 410.0 374.0" stroke="#ff3c00" stroke-width="2.8"/>
<path d="M425.0 362.0 C426.7 363.0 431.7 366.7 435.0 368.0 C438.3 369.3 443.3 369.7 445.0 370.0" stroke="#ff7000" stroke-width="1.8"/>
<path d="M400.0 305.0 C400.8 307.2 403.0 314.2 405.0 318.0 C407.0 321.8 409.2 325.0 412.0 328.0 C414.8 331.0 420.3 334.7 422.0 336.0" stroke="#ff7a00" stroke-width="1.8"/>
<path d="M397.5 345.0 C397.9 346.7 398.9 351.8 400.0 355.0 C401.1 358.2 403.3 362.5 404.0 364.0" stroke="#ff6a00" stroke-width="1.8"/>
</g>
<rect x="482.8" y="203" width="3" height="172" fill="#f0ff00"/>
<rect x="483" y="300" width="3" height="75" fill="#ffd000"/>
<rect x="483.2" y="316" width="3" height="13" fill="#ff3c00"/>
<g fill="none" stroke-linecap="round">
<path d="M487.0 262.0 C487.2 260.0 487.7 253.5 488.5 250.0 C489.3 246.5 491.4 242.5 492.0 241.0" stroke="#60ff10" stroke-width="1.5"/>
<path d="M492.0 242.0 C492.7 241.7 494.5 240.7 496.0 240.0 C497.5 239.3 500.2 238.3 501.0 238.0" stroke="#e0ff00" stroke-width="3"/>
<path d="M501.0 237.0 C502.0 235.2 505.2 230.0 507.0 226.0 C508.8 222.0 510.7 216.7 512.0 213.0 C513.3 209.3 514.5 205.5 515.0 204.0" stroke="#50ff18" stroke-width="1.6"/>
<path d="M490.0 262.0 C491.0 259.7 493.5 251.7 496.0 248.0 C498.5 244.3 502.3 243.8 505.0 240.0 C507.7 236.2 510.8 227.5 512.0 225.0" stroke="#38ff20" stroke-width="1.2"/>
<path d="M536.0 203.0 C537.2 204.8 540.7 210.3 543.0 214.0 C545.3 217.7 547.8 221.5 550.0 225.0 C552.2 228.5 555.0 233.3 556.0 235.0" stroke="#50ff18" stroke-width="1.6"/>
<path d="M556.0 235.0 C556.9 236.7 559.8 241.2 561.5 245.0 C563.2 248.8 565.2 255.8 566.0 258.0" stroke="#c8ff00" stroke-width="1.8"/>
<path d="M566.0 258.0 C566.5 260.8 568.0 268.8 569.0 275.0 C570.0 281.2 570.8 287.5 572.0 295.0 C573.2 302.5 574.3 312.5 576.0 320.0 C577.7 327.5 579.7 334.7 582.0 340.0 C584.3 345.3 587.0 348.7 590.0 352.0 C593.0 355.3 596.7 358.2 600.0 360.0 C603.3 361.8 608.3 362.5 610.0 363.0" stroke="#40ff20" stroke-width="1.5"/>
<path d="M530.0 203.0 C531.7 205.8 537.0 213.8 540.0 220.0 C543.0 226.2 545.3 231.7 548.0 240.0 C550.7 248.3 553.7 260.0 556.0 270.0 C558.3 280.0 561.0 295.0 562.0 300.0" stroke="#30ff28" stroke-width="1.2"/>
<path d="M529.5 266V375" stroke="#d0ff00" stroke-width="1.5" stroke-dasharray="6 2"/>
<path d="M531 290V340" stroke="#60ff10" stroke-width="3" stroke-dasharray="4 5"/>
<path d="M528 300 L508 375" stroke="#28ff30" stroke-width="1.2"/><path d="M532 300 L552 375" stroke="#28ff30" stroke-width="1.2"/>
<path d="M534 330 L540 375" stroke="#70ff10" stroke-width="1.2"/><path d="M537 345 L546 375" stroke="#50ff10" stroke-width="1.2"/>
</g>
<path d="M528 290 L518 330 L505 375 H557 L544 330 L533 290z" fill="#0cff50" opacity="0.4" filter="url(#b3)"/>
<rect x="531.2" y="311.2" width="1.2" height="63.8" fill="#38ff18" opacity="0.5"/>
<rect x="543.8" y="342.5" width="1.2" height="32.5" fill="#38ff18" opacity="0.5"/>
<rect x="534.5" y="317.7" width="1.2" height="57.3" fill="#38ff18" opacity="0.5"/>
<rect x="538.7" y="333.2" width="1.2" height="41.8" fill="#38ff18" opacity="0.5"/>
<rect x="519.7" y="354.7" width="1.2" height="20.3" fill="#38ff18" opacity="0.5"/>
<rect x="515.6" y="355.6" width="1.2" height="19.4" fill="#38ff18" opacity="0.5"/>
<rect x="514.4" y="351.8" width="1.2" height="23.2" fill="#38ff18" opacity="0.5"/>
<rect x="533.5" y="323.4" width="1.2" height="51.6" fill="#38ff18" opacity="0.5"/>
<rect x="536.3" y="328.2" width="1.2" height="46.8" fill="#38ff18" opacity="0.5"/>
<rect x="530.6" y="340.5" width="1.2" height="34.5" fill="#38ff18" opacity="0.5"/>
<rect x="543.5" y="343.2" width="1.2" height="31.8" fill="#38ff18" opacity="0.5"/>
<rect x="531.1" y="321.5" width="1.2" height="53.5" fill="#38ff18" opacity="0.5"/>
<rect x="537.7" y="347.3" width="1.2" height="27.7" fill="#38ff18" opacity="0.5"/>
<rect x="540.9" y="347.9" width="1.2" height="27.1" fill="#38ff18" opacity="0.5"/>
<rect x="512" y="331" width="5" height="5" fill="#ffc400"/><rect x="517" y="333" width="8" height="3" fill="#60ff20" opacity="0.7"/>
<rect x="532" y="342" width="19" height="5" fill="#f4f400"/><rect x="536" y="343" width="9" height="3" fill="#ffd800"/>
<rect x="534" y="334" width="9" height="6" fill="#b0ff00" opacity="0.8"/>
<rect x="528.5" y="334" width="2" height="14" fill="#ffe000"/>
<g fill="none" stroke-linecap="round">
<path d="M667.0 226.0 C665.7 228.0 661.2 233.2 659.0 238.0 C656.8 242.8 655.7 248.0 654.0 255.0 C652.3 262.0 650.7 270.8 649.0 280.0 C647.3 289.2 645.8 300.3 644.0 310.0 C642.2 319.7 640.3 331.0 638.0 338.0 C635.7 345.0 633.2 348.2 630.0 352.0 C626.8 355.8 622.3 359.2 619.0 361.0 C615.7 362.8 611.5 362.7 610.0 363.0" stroke="#40ff18" stroke-width="1.5"/>
<path d="M669.0 240.0 C667.7 242.5 663.2 249.2 661.0 255.0 C658.8 260.8 657.8 266.7 656.0 275.0 C654.2 283.3 652.0 295.0 650.0 305.0 C648.0 315.0 646.7 326.5 644.0 335.0 C641.3 343.5 637.8 350.8 634.0 356.0 C630.2 361.2 625.7 364.3 621.0 366.0 C616.3 367.7 611.2 367.3 606.0 366.0 C600.8 364.7 594.7 361.5 590.0 358.0 C585.3 354.5 580.0 347.2 578.0 345.0" stroke="#30ff20" stroke-width="1.2"/>
<path d="M662.0 232.0 C662.5 231.2 663.8 228.2 665.0 227.0 C666.2 225.8 668.3 225.3 669.0 225.0" stroke="#b0ff00" stroke-width="2.4"/>
<path d="M596.0 360.0 C597.3 360.7 601.3 363.2 604.0 364.0 C606.7 364.8 609.0 365.2 612.0 365.0 C615.0 364.8 620.3 363.3 622.0 363.0" stroke="#80ff00" stroke-width="1.4"/>
</g>
</g>
<g fill="none" stroke="#000" stroke-width="1" shape-rendering="crispEdges">
<rect x="219.5" y="197.5" width="469" height="180"/>
<rect x="219.5" y="440.5" width="469" height="181"/>
<path d="M220.5 378v5M238.5 378v11M256.5 378v5M274.5 378v5M292.5 378v5M310.5 378v5M328.5 378v5M346.5 378v5M364.5 378v5M382.5 378v5M400.5 378v5M418.5 378v5M436.5 378v5M454.5 378v11M472.5 378v5M490.5 378v5M508.5 378v5M526.5 378v5M544.5 378v5M562.5 378v5M580.5 378v5M598.5 378v5M616.5 378v5M634.5 378v5M652.5 378v5M670.5 378v11M688.5 378v5M220.5 622v5M238.5 622v11M256.5 622v5M274.5 622v5M292.5 622v5M310.5 622v5M328.5 622v5M346.5 622v5M364.5 622v5M382.5 622v5M400.5 622v5M418.5 622v5M436.5 622v5M454.5 622v11M472.5 622v5M490.5 622v5M508.5 622v5M526.5 622v5M544.5 622v5M562.5 622v5M580.5 622v5M598.5 622v5M616.5 622v5M634.5 622v5M652.5 622v5M670.5 622v11M688.5 622v5M219 374.5h-11M219 344.5h-5M219 326.5h-5M219 313.5h-5M219 303.5h-5M219 295.5h-5M219 288.5h-5M219 283.5h-5M219 277.5h-5M219 273.5h-11M219 242.5h-5M219 224.5h-5M219 212.5h-5M219 202.5h-5M219 441.5h-5M219 451.5h-11M219 463.5h-5M219 475.5h-11M219 487.5h-5M219 500.5h-11M219 514.5h-5M219 529.5h-11M219 545.5h-5M219 562.5h-11M219 580.5h-5M219 599.5h-11M219 621.5h-5M720.5 198V378M721 377.5h11M721 363.5h5M721 350.5h11M721 337.5h5M721 323.5h11M721 310.5h5M721 297.5h11M721 283.5h5M721 270.5h11M721 257.5h5M721 244.5h11M721 230.5h5M721 217.5h11M721 204.5h5"/>
</g>
<defs><linearGradient id="cb" x1="0" y1="378" x2="0" y2="198" gradientUnits="userSpaceOnUse"><stop offset="0.0000" stop-color="#000089"/><stop offset="0.1176" stop-color="#0000ff"/><stop offset="0.2471" stop-color="#00ffff"/><stop offset="0.4941" stop-color="#00f400"/><stop offset="0.6353" stop-color="#ffff00"/><stop offset="0.7529" stop-color="#ffb900"/><stop offset="0.8667" stop-color="#ff5400"/><stop offset="1.0000" stop-color="#ff0000"/></linearGradient></defs>
<rect x="704" y="198" width="16" height="180" fill="url(#cb)"/>
<path d="M238.0 481.8 238.0 492.5 238.2 499.3 238.3 502.1 238.4 491.5 238.5 494.9 238.6 507.7 238.7 489.0 238.8 494.8 238.9 499.3 239.0 490.8 239.2 503.3 239.3 500.6 239.4 507.7 239.5 500.3 239.6 503.7 239.7 492.2 239.8 498.6 239.9 492.3 240.0 499.8 240.2 500.5 240.3 492.0 240.4 501.2 240.5 496.0 240.6 502.7 240.7 507.5 240.8 497.0 240.9 509.0 241.0 502.4 241.2 514.4 241.3 501.9 241.4 505.8 241.5 514.9 241.6 516.6 241.7 513.9 241.8 503.5 241.9 507.5 242.0 508.0 242.2 513.8 242.3 501.2 242.4 518.2 242.5 511.8 242.6 499.5 242.7 502.6 242.8 522.0 242.9 505.0 243.0 525.3 243.2 506.3 243.3 513.4 243.4 504.5 243.5 508.8 243.6 503.6 243.7 517.3 243.8 523.5 243.9 512.5 244.0 514.8 244.2 515.7 244.3 526.0 244.4 522.5 244.5 512.3 244.6 502.9 244.7 512.2 244.8 502.2 244.9 535.5 245.0 516.0 245.2 513.9 245.3 527.3 245.4 522.9 245.5 520.8 245.6 520.7 245.7 527.3 245.8 526.9 245.9 531.1 246.0 522.8 246.2 529.9 246.3 528.4 246.4 522.9 246.5 531.0 246.6 522.5 246.7 522.1 246.8 525.8 246.9 529.5 247.0 533.0 247.2 531.2 247.3 524.0 247.4 529.9 247.5 525.2 247.6 524.0 247.7 532.7 247.8 545.7 247.9 534.0 248.0 519.0 248.2 536.1 248.3 532.9 248.4 522.1 248.5 530.6 248.6 536.5 248.7 545.9 248.8 544.4 248.9 547.1 249.0 531.9 249.2 544.3 249.3 537.9 249.4 532.8 249.5 529.8 249.6 531.4 249.7 532.4 249.8 526.2 249.9 536.5 250.0 526.6 250.2 533.2 250.3 545.6 250.4 541.0 250.5 538.0 250.6 536.2 250.7 531.5 250.8 535.8 250.9 539.6 251.0 538.3 251.2 552.5 251.3 538.4 251.4 537.8 251.5 543.2 251.6 534.7 251.7 535.4 251.8 543.9 251.9 545.2 252.0 543.5 252.2 541.9 252.3 541.1 252.4 534.3 252.5 533.8 252.6 541.5 252.7 532.3 252.8 543.5 252.9 538.1 253.0 537.2 253.2 550.6 253.3 532.6 253.4 541.0 253.5 536.7 253.6 544.0 253.7 533.9 253.8 535.8 253.9 532.7 254.0 540.1 254.2 541.5 254.3 553.3 254.4 543.4 254.5 553.4 254.6 545.9 254.7 538.4 254.8 533.0 254.9 542.1 255.0 541.7 255.2 542.7 255.3 541.0 255.4 547.8 255.5 546.3 255.6 544.6 255.7 547.6 255.8 545.0 255.9 539.5 256.0 544.7 256.2 548.5 256.3 538.4 256.4 548.5 256.5 546.1 256.6 538.2 256.7 538.0 256.8 551.9 256.9 549.6 257.0 543.7 257.2 547.3 257.3 549.9 257.4 545.9 257.5 550.4 257.6 546.7 257.7 555.4 257.8 547.7 257.9 550.0 258.0 549.0 258.2 553.4 258.3 553.3 258.4 551.4 258.5 550.4 258.6 551.9 258.7 551.2 258.8 554.3 258.9 552.2 259.0 560.6 259.2 559.5 259.3 562.1 259.4 566.9 259.5 559.7 259.6 560.1 259.7 562.4 259.8 562.6 259.9 559.0 260.0 553.2 260.2 561.8 260.3 559.5 260.4 562.9 260.5 563.4 260.6 560.5 260.7 561.0 260.8 564.3 260.9 558.7 261.0 559.0 261.2 564.9 261.3 567.2 261.4 556.2 261.5 563.1 261.6 557.7 261.7 554.6 261.8 558.8 261.9 550.5 262.0 560.9 262.2 562.0 262.3 557.5 262.4 554.7 262.5 556.8 262.6 556.9 262.7 564.3 262.8 565.2 262.9 558.8 263.0 554.0 263.2 555.0 263.3 562.4 263.4 558.6 263.5 554.0 263.6 557.4 263.7 558.4 263.8 558.9 263.9 564.4 264.0 555.4 264.2 560.2 264.3 559.3 264.4 550.9 264.5 558.8 264.6 552.3 264.7 552.1 264.8 560.2 264.9 557.0 265.0 557.3 265.2 554.1 265.3 557.4 265.4 559.0 265.5 558.4 265.6 562.4 265.7 558.9 265.8 553.4 265.9 552.0 266.0 561.3 266.2 557.4 266.3 565.6 266.4 561.4 266.5 557.2 266.6 559.8 266.7 564.6 266.8 562.6 266.9 554.2 267.0 557.2 267.2 559.4 267.3 557.7 267.4 564.9 267.5 564.4 267.6 566.0 267.7 559.6 267.8 556.6 267.9 557.8 268.0 559.2 268.2 567.2 268.3 559.3 268.4 564.9 268.5 565.1 268.6 564.4 268.7 559.6 268.8 563.6 268.9 562.8 269.0 562.3 269.2 562.9 269.3 565.6 269.4 563.3 269.5 567.0 269.6 565.7 269.7 565.8 269.8 567.6 269.9 568.6 270.0 567.8 270.2 560.6 270.3 559.5 270.4 569.6 270.5 565.2 270.6 568.7 270.7 574.2 270.8 566.7 270.9 569.7 271.0 571.2 271.2 572.6 271.3 570.0 271.4 561.6 271.5 568.6 271.6 567.7 271.7 573.7 271.8 573.0 271.9 571.8 272.0 563.8 272.2 562.1 272.3 565.5 272.4 563.4 272.5 563.1 272.6 569.4 272.7 572.3 272.8 570.8 272.9 572.4 273.0 571.9 273.2 568.5 273.3 572.0 273.4 573.3 273.5 575.8 273.6 565.0 273.7 567.9 273.8 571.5 273.9 577.0 274.0 574.9 274.2 576.8 274.3 569.8 274.4 574.2 274.5 576.2 274.6 573.5 274.7 574.7 274.8 574.4 274.9 578.0 275.0 569.0 275.2 572.0 275.3 571.3 275.4 574.0 275.5 572.7 275.6 577.3 275.7 567.1 275.8 568.4 275.9 569.2 276.0 573.4 276.2 577.5 276.3 569.0 276.4 568.8 276.5 573.2 276.6 574.5 276.7 582.2 276.8 576.1 276.9 577.1 277.0 576.0 277.2 570.0 277.3 569.5 277.4 570.1 277.5 577.0 277.6 576.5 277.7 569.8 277.8 569.0 277.9 570.7 278.0 571.9 278.2 573.5 278.3 568.9 278.4 575.4 278.5 566.7 278.6 582.5 278.7 577.3 278.8 575.6 278.9 572.9 279.0 566.0 279.2 576.9 279.3 572.3 279.4 581.3 279.5 569.6 279.6 564.2 279.7 579.5 279.8 578.3 279.9 573.4 280.0 578.8 280.2 572.5 280.3 570.5 280.4 575.0 280.5 573.8 280.6 575.9 280.7 576.4 280.8 575.6 280.9 584.3 281.0 574.2 281.2 576.1 281.3 577.5 281.4 571.1 281.5 584.0 281.6 565.8 281.7 575.0 281.8 566.7 281.9 581.9 282.0 568.2 282.2 573.7 282.3 563.9 282.4 575.1 282.5 572.9 282.6 575.3 282.7 570.3 282.8 576.6 282.9 575.9 283.0 572.6 283.2 569.2 283.3 568.9 283.4 573.2 283.5 576.0 283.6 566.5 283.7 572.3 283.8 573.9 283.9 574.4 284.0 577.6 284.2 571.7 284.3 575.5 284.4 568.8 284.5 574.0 284.6 575.8 284.7 569.8 284.8 571.6 284.9 574.5 285.0 569.3 285.2 570.7 285.3 577.3 285.4 578.1 285.5 574.6 285.6 567.6 285.7 570.8 285.8 574.2 285.9 572.1 286.0 564.4 286.2 570.8 286.3 575.5 286.4 581.5 286.5 575.6 286.6 570.0 286.7 575.4 286.8 571.8 286.9 574.4 287.0 567.1 287.2 573.3 287.3 574.0 287.4 575.5 287.5 567.9 287.6 573.0 287.7 571.9 287.8 566.9 287.9 576.8 288.0 577.9 288.2 579.5 288.3 570.5 288.4 577.0 288.5 572.2 288.6 574.2 288.7 581.7 288.8 576.4 288.9 575.7 289.0 575.0 289.2 574.0 289.3 573.9 289.4 573.7 289.5 571.5 289.6 582.4 289.7 573.5 289.8 576.8 289.9 571.4 290.0 575.8 290.2 573.2 290.3 568.1 290.4 569.6 290.5 564.0 290.6 569.3 290.7 579.3 290.8 569.9 290.9 573.3 291.0 570.2 291.2 583.3 291.3 577.9 291.4 573.7 291.5 573.1 291.6 579.2 291.7 573.1 291.8 577.2 291.9 576.2 292.0 569.8 292.2 569.7 292.3 570.3 292.4 576.1 292.5 581.5 292.6 570.3 292.7 575.9 292.8 572.6 292.9 572.1 293.0 568.3 293.2 577.0 293.3 572.3 293.4 582.4 293.5 564.3 293.6 570.1 293.7 571.1 293.8 572.8 293.9 571.1 294.0 577.1 294.2 572.9 294.3 576.7 294.4 570.0 294.5 569.7 294.6 575.6 294.7 568.2 294.8 577.2 294.9 575.3 295.0 575.5 295.2 573.9 295.3 584.5 295.4 578.3 295.5 573.6 295.6 570.7 295.7 560.6 295.8 561.4 295.9 572.1 296.0 565.9 296.2 573.9 296.3 574.4 296.4 555.8 296.5 570.6 296.6 570.0 296.7 568.3 296.8 574.6 296.9 563.3 297.0 583.2 297.2 566.2 297.3 565.2 297.4 567.1 297.5 567.7 297.6 576.7 297.7 561.2 297.8 554.4 297.9 558.1 298.0 581.0 298.2 572.3 298.3 564.5 298.4 564.3 298.5 570.7 298.6 559.6 298.7 559.9 298.8 557.0 298.9 566.6 299.0 562.7 299.2 556.6 299.3 572.7 299.4 561.5 299.5 559.0 299.6 567.9 299.7 578.0 299.8 568.8 299.9 562.2 300.0 562.3 300.2 566.7 300.3 558.0 300.4 551.7 300.5 561.8 300.6 565.4 300.7 559.0 300.8 562.3 300.9 555.0 301.0 556.3 301.2 553.8 301.3 549.5 301.4 550.1 301.5 561.1 301.6 555.5 301.7 557.1 301.8 548.1 301.9 555.1 302.0 553.6 302.2 550.8 302.3 542.9 302.4 568.4 302.5 554.8 302.6 548.5 302.7 557.7 302.8 557.7 302.9 542.3 303.0 547.9 303.2 542.5 303.3 559.3 303.4 546.5 303.5 549.5 303.6 537.7 303.7 545.0 303.8 550.4 303.9 552.2 304.0 547.8 304.2 556.0 304.3 549.7 304.4 544.2 304.5 545.5 304.6 548.6 304.7 547.8 304.8 552.8 304.9 552.7 305.0 552.3 305.2 547.6 305.3 550.1 305.4 560.7 305.5 546.8 305.6 554.1 305.7 552.8 305.8 561.0 305.9 561.2 306.0 550.7 306.2 564.7 306.3 548.5 306.4 549.5 306.5 552.3 306.6 555.8 306.7 548.5 306.8 545.4 306.9 544.5 307.0 557.5 307.2 549.9 307.3 556.6 307.4 550.6 307.5 543.1 307.6 550.5 307.7 545.9 307.8 548.2 307.9 551.1 308.0 552.9 308.2 560.4 308.3 557.5 308.4 552.4 308.5 549.4 308.6 537.4 308.7 558.5 308.8 551.0 308.9 555.5 309.0 557.9 309.2 554.0 309.3 554.6 309.4 560.1 309.5 552.3 309.6 536.6 309.7 554.3 309.8 552.2 309.9 551.7 310.0 552.8 310.2 553.7 310.3 555.3 310.4 552.4 310.5 554.7 310.6 546.8 310.7 552.9 310.8 559.4 310.9 547.2 311.0 559.5 311.2 546.2 311.3 538.6 311.4 550.9 311.5 556.8 311.6 555.1 311.7 546.6 311.8 547.4 311.9 563.7 312.0 552.3 312.2 555.1 312.3 551.4 312.4 551.2 312.5 558.4 312.6 561.7 312.7 551.4 312.8 556.5 312.9 556.8 313.0 563.7 313.2 563.0 313.3 551.2 313.4 553.3 313.5 559.1 313.6 557.8 313.7 572.0 313.8 560.5 313.9 562.4 314.0 561.6 314.2 565.4 314.3 550.2 314.4 558.5 314.5 565.8 314.6 559.7 314.7 556.6 314.8 556.1 314.9 561.6 315.0 557.1 315.2 555.6 315.3 567.3 315.4 558.4 315.5 553.4 315.6 554.1 315.7 555.9 315.8 564.0 315.9 564.3 316.0 568.4 316.2 556.6 316.3 571.7 316.4 578.5 316.5 561.2 316.6 555.4 316.7 563.0 316.8 569.7 316.9 570.8 317.0 568.3 317.2 553.1 317.3 557.7 317.4 551.7 317.5 548.5 317.6 565.6 317.7 550.9 317.8 563.4 317.9 566.3 318.0 544.4 318.2 545.1 318.3 559.6 318.4 551.9 318.5 557.5 318.6 548.9 318.7 568.5 318.8 552.0 318.9 540.1 319.0 565.2 319.2 554.0 319.3 556.7 319.4 556.9 319.5 548.9 319.6 543.1 319.7 547.1 319.8 545.9 319.9 559.5 320.0 551.1 320.2 546.3 320.3 556.0 320.4 561.1 320.5 545.6 320.6 557.9 320.7 544.4 320.8 549.2 320.9 549.1 321.0 541.8 321.2 547.3 321.3 539.3 321.4 537.5 321.5 538.0 321.6 551.6 321.7 543.3 321.8 538.4 321.9 541.0 322.0 534.1 322.2 539.8 322.3 538.4 322.4 530.6 322.5 537.4 322.6 537.8 322.7 530.0 322.8 537.9 322.9 534.7 323.0 536.5 323.2 526.7 323.3 531.0 323.4 537.1 323.5 544.6 323.6 536.7 323.7 530.5 323.8 536.0 323.9 520.6 324.0 531.9 324.2 530.0 324.3 519.0 324.4 528.3 324.5 521.8 324.6 536.7 324.7 525.9 324.8 526.5 324.9 524.3 325.0 523.2 325.2 529.9 325.3 525.9 325.4 521.0 325.5 514.0 325.6 520.7 325.7 520.8 325.8 524.9 325.9 520.8 326.0 523.8 326.2 516.0 326.3 524.6 326.4 526.4 326.5 519.2 326.6 522.2 326.7 513.9 326.8 519.0 326.9 515.5 327.0 520.8 327.2 516.4 327.3 517.9 327.4 511.6 327.5 511.7 327.6 514.7 327.7 516.6 327.8 506.3 327.9 521.7 328.0 511.4 328.2 507.7 328.3 507.2 328.4 511.9 328.5 514.4 328.6 513.3 328.7 505.9 328.8 515.2 328.9 518.1 329.0 505.7 329.2 518.3 329.3 487.0 329.4 513.7 329.5 520.6 329.6 519.9 329.7 520.8 329.8 512.0 329.9 517.0 330.0 504.5 330.2 512.4 330.3 519.0 330.4 516.8 330.5 505.1 330.6 522.1 330.7 510.5 330.8 511.3 330.9 520.6 331.0 517.6 331.2 516.5 331.3 517.0 331.4 516.6 331.5 508.2 331.6 512.1 331.7 511.6 331.8 519.8 331.9 511.3 332.0 512.6 332.2 517.3 332.3 514.6 332.4 511.5 332.5 518.8 332.6 508.6 332.7 516.2 332.8 514.7 332.9 508.9 333.0 504.2 333.2 507.9 333.3 503.4 333.4 507.3 333.5 498.9 333.6 505.6 333.7 511.4 333.8 501.1 333.9 502.7 334.0 499.6 334.2 484.2 334.3 492.8 334.4 497.2 334.5 484.3 334.6 474.1 334.7 483.5 334.8 494.5 334.9 478.9 335.0 486.0 335.2 474.0 335.3 487.0 335.4 474.7 335.5 478.8 335.6 480.4 335.7 473.3 335.8 484.4 335.9 469.2 336.0 469.7 336.2 476.8 336.3 470.7 336.4 466.9 336.5 459.2 336.6 468.3 336.7 480.5 336.8 479.4 336.9 474.7 337.0 477.0 337.2 474.7 337.3 480.3 337.4 467.7 337.5 483.3 337.6 492.7 337.7 500.0 337.8 486.9 337.9 495.0 338.0 494.8 338.2 489.8 338.3 479.4 338.4 499.6 338.5 484.9 338.6 474.7 338.7 487.1 338.8 482.3 338.9 479.2 339.0 481.5 339.2 475.5 339.3 479.9 339.4 474.1 339.5 490.5 339.6 490.5 339.7 483.3 339.8 500.5 339.9 512.5 340.0 495.9 340.2 485.4 340.3 490.1 340.4 493.1 340.5 485.2 340.6 505.7 340.7 499.7 340.8 496.0 340.9 494.8 341.0 496.3 341.2 493.4 341.3 488.5 341.4 475.3 341.5 483.1 341.6 493.1 341.7 491.1 341.8 500.4 341.9 478.3 342.0 484.5 342.2 471.6 342.3 488.0 342.4 499.1 342.5 478.4 342.6 481.4 342.7 504.7 342.8 477.6 342.9 493.2 343.0 472.9 343.2 483.6 343.3 486.0 343.4 488.7 343.5 509.4 343.6 489.9 343.7 504.8 343.8 478.7 343.9 489.9 344.0 502.6 344.2 507.7 344.3 489.6 344.4 479.7 344.5 483.1 344.6 467.6 344.7 490.8 344.8 476.9 344.9 492.8 345.0 498.2 345.2 485.0 345.3 498.3 345.4 493.7 345.5 494.8 345.6 478.2 345.7 466.0 345.8 468.2 345.9 470.5 346.0 482.8 346.2 481.5 346.3 473.4 346.4 488.7 346.5 489.9 346.6 483.0 346.7 487.5 346.8 487.2 346.9 476.7 347.0 496.9 347.2 476.9 347.3 490.5 347.4 489.8 347.5 479.1 347.6 511.3 347.7 465.5 347.8 472.7 347.9 497.9 348.0 483.5 348.2 466.2 348.3 475.3 348.4 494.3 348.5 487.8 348.6 474.1 348.7 499.0 348.8 487.4 348.9 475.4 349.0 485.2 349.2 514.4 349.3 483.5 349.4 494.2 349.5 494.8 349.6 479.5 349.7 500.5 349.8 510.5 349.9 487.7 350.0 484.9 350.2 505.0 350.3 475.4 350.4 490.4 350.5 494.8 350.6 492.3 350.7 510.3 350.8 500.1 350.9 516.5 351.0 497.8 351.2 499.0 351.3 490.9 351.4 472.0 351.5 489.1 351.6 493.8 351.7 504.5 351.8 473.3 351.9 506.8 352.0 503.6 352.2 491.8 352.3 487.5 352.4 518.6 352.5 499.6 352.6 504.3 352.7 497.3 352.8 506.4 352.9 512.2 353.0 514.3 353.2 493.6 353.3 502.1 353.4 515.5 353.5 498.0 353.6 506.6 353.7 512.9 353.8 503.1 353.9 504.6 354.0 489.4 354.2 533.5 354.3 532.4 354.4 526.4 354.5 515.9 354.6 510.7 354.7 507.3 354.8 520.2 354.9 535.3 355.0 515.7 355.2 518.5 355.3 528.7 355.4 506.4 355.5 507.7 355.6 508.1 355.7 515.1 355.8 508.1 355.9 502.9 356.0 514.5 356.2 505.0 356.3 515.6 356.4 508.3 356.5 518.1 356.6 521.9 356.7 514.5 356.8 519.8 356.9 521.0 357.0 517.2 357.2 510.6 357.3 534.6 357.4 526.4 357.5 516.6 357.6 492.2 357.7 532.3 357.8 530.2 357.9 527.6 358.0 528.7 358.2 516.3 358.3 523.0 358.4 523.4 358.5 520.6 358.6 528.6 358.7 538.3 358.8 516.5 358.9 538.3 359.0 555.0 359.2 560.8 359.3 538.9 359.4 537.9 359.5 552.9 359.6 549.5 359.7 555.2 359.8 543.4 359.9 554.8 360.0 570.0 360.2 561.3 360.3 571.9 360.4 558.6 360.5 565.9 360.6 566.6 360.6 578.8 M373.1 550.0 375.3 487.4 375.4 487.1 375.5 507.7 375.6 489.7 375.7 487.3 375.9 492.4 376.0 492.5 376.1 478.9 376.2 482.8 376.3 478.2 376.4 486.1 376.5 494.3 376.6 480.8 376.7 501.0 376.9 479.4 377.0 485.5 377.1 501.2 377.2 503.9 377.3 495.9 377.4 500.8 377.5 504.9 377.6 501.6 377.7 490.9 377.9 479.2 378.0 486.4 378.1 489.9 378.2 492.5 378.3 492.8 378.4 480.1 378.5 486.7 378.6 489.7 378.7 489.9 378.9 485.4 379.0 484.7 379.1 483.8 379.2 485.1 379.3 493.6 379.4 503.7 379.5 499.1 379.6 508.9 379.7 496.2 379.9 472.9 380.0 483.4 380.1 502.8 380.2 500.3 380.3 499.9 380.4 494.8 380.5 491.5 380.6 489.2 380.7 471.8 380.9 471.3 381.0 500.1 381.1 496.5 381.2 478.2 381.3 485.4 381.4 479.1 381.5 483.1 381.6 482.6 381.7 476.5 381.9 477.8 382.0 505.9 382.1 500.4 382.2 490.3 382.3 487.9 382.4 481.8 382.5 480.5 382.6 485.6 382.7 494.2 382.9 493.4 383.0 495.5 383.1 474.1 383.2 475.7 383.3 479.5 383.4 503.6 383.5 493.5 383.6 488.5 383.7 485.4 383.9 475.6 384.0 462.9 384.1 462.8 384.2 489.7 384.3 475.7 384.4 481.9 384.5 464.1 384.6 481.5 384.7 468.0 384.9 495.1 385.0 487.5 385.1 487.9 385.2 485.5 385.3 483.5 385.4 478.0 385.5 472.6 385.6 495.6 385.7 480.4 385.9 474.8 386.0 481.5 386.1 471.5 386.2 479.6 386.3 484.7 386.4 501.5 386.5 498.3 386.6 484.6 386.7 475.0 386.9 494.8 387.0 480.8 387.1 483.5 387.2 465.3 387.3 487.3 387.4 466.1 387.5 471.4 387.6 470.5 387.7 475.9 387.9 473.3 388.0 493.6 388.1 470.7 388.2 463.3 388.3 477.2 388.4 470.6 388.5 488.3 388.6 491.5 388.7 481.9 388.9 487.8 389.0 464.7 389.1 469.5 389.2 473.0 389.3 469.0 389.4 482.7 389.5 449.0 389.6 461.0 389.7 480.9 389.9 483.1 390.0 476.1 390.1 484.9 390.2 488.0 390.3 477.3 390.4 471.0 390.5 495.4 390.6 463.7 390.7 479.6 390.9 496.6 391.0 479.5 391.1 481.2 391.2 500.2 391.3 485.9 391.4 500.6 391.5 474.8 391.6 483.5 391.7 469.8 391.9 467.7 392.0 472.4 392.1 486.4 392.2 493.2 392.3 502.5 392.4 483.6 392.5 494.5 392.6 517.0 392.7 496.2 392.9 476.0 393.0 495.8 393.1 513.8 393.2 496.5 393.3 492.0 393.4 482.7 393.5 501.1 393.6 507.6 393.7 505.5 393.9 504.5 394.0 519.0 394.1 499.8 394.2 506.7 394.3 500.0 394.4 500.3 394.5 496.7 394.6 503.7 394.7 507.8 394.9 495.3 395.0 491.8 395.1 482.3 395.2 497.8 395.3 490.9 395.4 473.7 395.5 470.8 395.6 475.5 395.7 472.4 395.9 467.2 396.0 471.6 396.1 485.7 396.2 481.3 396.3 445.0 396.4 461.0 396.5 475.6 396.6 476.4 396.7 494.4 396.9 495.0 397.0 482.3 397.1 473.9 397.2 481.5 397.3 468.3 397.4 473.3 397.5 484.1 397.6 474.4 397.7 475.5 397.9 468.5 398.0 472.1 398.1 491.3 398.2 496.6 398.3 467.9 398.4 478.9 398.5 474.9 398.6 479.7 398.7 482.3 398.9 466.8 399.0 470.1 399.1 490.5 399.2 466.3 399.3 483.6 399.4 490.9 399.5 476.9 399.6 469.0 399.7 464.9 399.9 479.8 400.0 495.2 400.1 474.6 400.2 477.0 400.3 474.3 400.4 478.6 400.5 466.2 400.6 493.4 400.7 491.6 400.9 487.4 401.0 482.2 401.1 511.1 401.2 482.2 401.3 498.8 401.4 505.8 401.5 492.0 401.6 477.3 401.7 479.5 401.9 494.7 402.0 475.9 402.1 480.7 402.2 475.6 402.3 491.6 402.4 483.8 402.5 492.4 402.6 478.9 402.7 480.2 402.9 486.3 403.0 494.7 403.1 487.8 403.2 488.0 403.3 489.9 403.4 494.9 403.5 499.9 403.6 486.9 403.7 507.7 403.9 491.4 404.0 505.5 404.1 501.8 404.2 503.0 404.3 489.9 404.4 488.2 404.5 486.0 404.6 491.0 404.7 493.5 404.9 498.2 405.0 492.0 405.1 496.5 405.2 488.5 405.3 501.3 405.4 489.8 405.5 499.9 405.6 494.8 405.7 492.9 405.9 496.5 406.0 498.8 406.1 499.8 406.2 497.1 406.3 493.4 406.4 499.5 406.5 491.9 406.6 495.0 406.7 495.6 406.9 501.9 407.0 493.9 407.1 487.7 407.2 500.3 407.3 505.2 407.4 493.6 407.5 491.3 407.6 491.3 407.7 491.5 407.9 494.0 408.0 498.8 408.1 491.1 408.2 492.8 408.3 497.1 408.4 490.4 408.5 496.3 408.6 499.7 408.7 488.2 408.9 487.2 409.0 495.2 409.1 502.0 409.2 488.2 409.3 487.9 409.4 492.2 409.5 490.2 409.6 494.4 409.7 492.4 409.9 489.9 410.0 488.5 410.1 489.3 410.2 488.8 410.3 484.1 410.4 487.5 410.5 488.3 410.6 488.7 410.7 498.5 410.9 485.1 411.0 489.7 411.1 483.4 411.2 487.8 411.3 483.5 411.4 481.5 411.5 482.9 411.6 480.6 411.7 481.8 411.9 478.0 412.0 471.6 412.1 468.7 412.2 482.4 412.3 484.4 412.4 475.5 412.5 478.3 412.6 471.9 412.7 482.2 412.9 486.3 413.0 471.5 413.1 469.3 413.2 483.4 413.3 483.1 413.4 490.7 413.5 478.4 413.6 478.9 413.7 484.7 413.9 485.2 414.0 477.4 414.1 478.1 414.2 490.5 414.3 484.7 414.4 480.3 414.5 477.9 414.6 481.8 414.7 483.1 414.9 482.3 415.0 492.3 415.1 493.5 415.2 486.0 415.3 483.8 415.4 471.5 415.5 486.8 415.6 479.8 415.7 494.7 415.9 487.6 416.0 482.5 416.1 481.2 416.2 486.4 416.3 477.8 416.4 485.2 416.5 485.5 416.6 491.2 416.7 485.4 416.9 484.6 417.0 491.5 417.1 477.9 417.2 484.3 417.3 478.5 417.4 483.9 417.5 479.6 417.6 485.9 417.7 492.7 417.9 485.2 418.0 480.8 418.1 486.7 418.2 483.6 418.3 482.0 418.4 477.1 418.5 498.8 418.6 490.9 418.7 487.2 418.9 483.8 419.0 488.9 419.1 493.5 419.2 496.3 419.3 486.4 419.4 494.0 419.5 491.5 419.6 485.8 419.7 474.3 419.9 487.2 420.0 476.9 420.1 484.0 420.2 485.1 420.3 488.0 420.4 491.2 420.5 485.0 420.6 492.3 420.7 478.7 420.9 482.8 421.0 476.0 421.1 496.1 421.2 486.5 421.3 497.7 421.4 493.0 421.5 485.5 421.6 491.6 421.7 492.6 421.9 492.0 422.0 496.7 422.1 494.3 422.2 492.4 422.3 488.4 422.4 503.1 422.5 486.3 422.6 499.4 422.7 504.3 422.9 496.6 423.0 494.2 423.1 486.6 423.2 488.7 423.3 488.6 423.4 503.4 423.5 502.5 423.6 503.2 423.7 489.1 423.9 497.9 424.0 492.8 424.1 492.8 424.2 493.5 424.3 488.5 424.4 498.5 424.5 507.6 424.6 494.3 424.7 492.3 424.9 492.7 425.0 492.7 425.1 493.0 425.2 499.3 425.3 497.0 425.4 499.2 425.5 497.3 425.6 498.2 425.7 505.5 425.9 502.6 426.0 503.7 426.1 490.9 426.2 499.5 426.3 493.1 426.4 496.5 426.5 497.1 426.6 489.6 426.7 493.5 426.9 496.8 427.0 500.1 427.1 503.5 427.2 496.3 427.3 490.4 427.4 496.1 427.5 497.3 427.6 499.5 427.7 495.5 427.9 505.5 428.0 502.8 428.1 496.2 428.2 492.2 428.3 499.1 428.4 490.6 428.5 492.9 428.6 501.0 428.7 505.9 428.9 505.9 429.0 504.8 429.1 500.5 429.2 499.0 429.3 503.1 429.4 489.5 429.5 506.4 429.6 512.8 429.7 493.0 429.9 497.5 430.0 499.5 430.1 499.5 430.2 514.6 430.3 492.3 430.4 499.7 430.5 499.4 430.6 509.9 430.7 503.4 430.9 492.8 431.0 502.7 431.1 489.1 431.2 499.6 431.3 512.9 431.4 501.8 431.5 503.8 431.6 498.5 431.7 498.7 431.9 496.1 432.0 508.4 432.1 497.5 432.2 498.2 432.3 502.1 432.4 502.2 432.5 506.3 432.6 509.1 432.7 502.8 432.9 497.9 433.0 503.6 433.1 496.1 433.2 506.2 433.3 505.1 433.4 512.2 433.5 505.7 433.6 495.1 433.7 503.7 433.9 512.7 434.0 502.5 434.1 503.3 434.2 499.9 434.3 503.2 434.4 502.4 434.5 506.4 434.6 502.6 434.7 511.6 434.9 503.1 435.0 499.8 435.1 502.8 435.2 505.6 435.3 501.1 435.4 502.9 435.5 509.2 435.6 498.2 435.7 497.7 435.9 499.2 436.0 503.5 436.1 504.4 436.2 504.2 436.3 504.6 436.4 510.9 436.5 494.6 436.6 509.2 436.7 501.0 436.9 500.4 437.0 507.8 437.1 505.3 437.2 504.6 437.3 504.4 437.4 503.4 437.5 494.9 437.6 495.4 437.7 514.3 437.9 503.2 438.0 499.8 438.1 502.8 438.2 519.1 438.3 505.8 438.4 499.2 438.5 504.6 438.6 512.5 438.7 502.9 438.9 499.2 439.0 505.2 439.1 506.9 439.2 501.2 439.3 500.4 439.4 506.3 439.5 504.9 439.6 509.5 439.7 511.6 439.9 520.5 440.0 506.4 440.1 505.4 440.2 512.1 440.3 508.8 440.4 505.8 440.5 516.8 440.6 508.2 440.7 503.6 440.9 504.3 441.0 509.9 441.1 493.0 441.2 513.1 441.3 513.3 441.4 515.2 441.5 503.8 441.6 506.2 441.7 510.7 441.9 518.9 442.0 520.0 442.1 502.3 442.2 488.6 442.3 504.6 442.4 497.7 442.5 493.7 442.6 500.4 442.7 508.2 442.9 501.7 443.0 505.4 443.1 512.5 443.2 496.8 443.3 506.2 443.4 493.7 443.5 501.0 443.6 486.2 443.7 497.2 443.9 500.8 444.0 486.5 444.1 498.6 444.2 502.2 444.3 491.1 444.4 508.5 444.5 503.5 444.6 497.3 444.7 490.3 444.9 493.9 445.0 502.0 445.1 504.8 445.2 498.5 445.3 485.2 445.4 500.8 445.5 497.8 445.6 494.7 445.7 494.9 445.9 492.9 446.0 502.2 446.1 498.7 446.2 493.1 446.3 490.9 446.4 508.8 446.5 487.5 446.6 498.5 446.7 490.5 446.9 510.9 447.0 502.3 447.1 492.8 447.2 489.5 447.3 486.6 447.4 482.9 447.5 498.2 447.6 502.3 447.7 505.1 447.9 494.2 448.0 499.3 448.1 502.0 448.2 493.3 448.3 483.9 448.4 500.8 448.5 499.1 448.6 483.9 448.7 501.2 448.9 497.4 449.0 501.6 449.1 501.7 449.2 501.9 449.3 496.5 449.4 492.6 449.5 502.4 449.6 496.6 449.7 504.5 449.9 501.1 450.0 496.1 450.1 502.6 450.2 496.7 450.3 503.1 450.4 493.0 450.5 499.4 450.6 490.5 450.7 513.0 450.9 491.2 451.0 494.6 451.1 493.1 451.2 510.4 451.3 505.0 451.4 505.4 451.5 498.9 451.6 509.9 451.7 503.7 451.9 502.6 452.0 504.3 452.1 498.0 452.2 504.2 452.3 497.4 452.4 495.3 452.5 500.7 452.6 517.4 452.7 502.1 452.9 513.4 453.0 485.9 453.1 509.8 453.2 493.3 453.3 500.3 453.4 508.4 453.5 513.0 453.6 502.4 453.7 506.7 453.9 491.3 454.0 495.3 454.1 504.1 454.2 503.7 454.3 494.0 454.4 483.3 454.5 509.9 454.6 492.3 454.7 497.8 454.9 488.3 455.0 504.6 455.1 480.8 455.2 498.9 455.3 504.0 455.4 503.6 455.5 496.5 455.6 485.5 455.7 479.5 455.9 493.3 456.0 489.0 456.1 492.0 456.2 487.4 456.3 485.5 456.4 488.0 456.5 487.8 456.6 493.8 456.7 480.8 456.9 501.9 457.0 491.5 457.1 489.1 457.2 492.2 457.3 488.3 457.4 492.2 457.5 499.1 457.6 475.1 457.7 473.6 457.9 498.1 458.0 484.6 458.1 486.2 458.2 489.2 458.3 491.0 458.4 491.9 458.5 484.2 458.6 493.3 458.7 503.1 458.9 482.9 459.0 469.1 459.1 468.9 459.2 483.5 459.3 489.5 459.4 480.5 459.5 488.6 459.6 487.7 459.7 478.0 459.9 489.0 460.0 488.6 460.1 496.4 460.2 482.9 460.3 489.8 460.4 498.7 460.5 486.5 460.6 489.6 460.7 490.8 460.9 489.8 461.0 489.6 461.1 512.4 461.2 502.7 461.3 491.6 461.4 483.2 461.5 477.7 461.6 476.0 461.7 494.0 461.9 484.9 462.0 498.8 462.1 491.6 462.2 502.9 462.3 499.2 462.4 502.0 462.5 481.8 462.6 496.7 462.7 491.2 462.9 507.8 463.0 488.7 463.1 491.1 463.2 496.2 463.3 489.1 463.4 511.0 463.5 508.6 463.6 502.4 463.7 505.1 463.9 487.9 464.0 500.8 464.1 508.1 464.2 507.9 464.3 504.2 464.4 496.5 464.5 511.6 464.6 518.7 464.7 506.8 464.9 488.5 465.0 504.3 465.1 499.5 465.2 493.6 465.3 511.9 465.4 520.4 465.5 505.0 465.6 521.2 465.7 487.8 465.9 502.8 466.0 500.3 466.1 506.3 466.2 510.8 466.3 512.9 466.4 492.4 466.5 495.4 466.6 505.8 466.7 503.7 466.9 496.5 467.0 508.6 467.1 507.7 467.2 513.8 467.3 510.6 467.4 524.1 467.5 523.8 467.6 520.7 467.7 500.8 467.9 508.3 468.0 511.6 468.1 521.6 468.2 517.0 468.3 518.1 468.4 516.2 468.5 508.2 468.6 507.8 468.7 513.7 468.9 510.7 469.0 522.2 469.1 504.3 469.2 517.3 469.3 513.0 469.4 523.4 469.5 514.4 469.6 514.9 469.7 514.8 469.9 526.8 470.0 516.7 470.1 515.1 470.2 522.7 470.3 512.6 470.4 518.2 470.5 516.0 470.6 517.7 470.7 525.0 470.9 528.3 471.0 513.4 471.1 509.8 471.2 517.8 471.3 516.2 471.4 522.9 471.5 531.5 471.6 514.7 471.7 510.3 471.9 516.1 472.0 518.7 472.1 517.4 472.2 516.2 472.3 523.7 472.4 505.9 472.5 517.4 472.6 518.4 472.7 516.2 472.9 510.4 473.0 534.0 473.1 507.1 473.2 512.7 473.3 517.5 473.4 511.1 473.5 507.3 473.6 507.5 473.7 512.9 473.9 500.0 474.0 509.8 474.1 505.0 474.2 514.4 474.3 519.9 474.4 499.1 474.5 514.8 474.6 494.0 474.7 502.7 474.9 494.2 475.0 515.3 475.1 490.4 475.2 509.8 475.3 493.7 475.4 506.0 475.5 500.1 475.6 502.5 475.7 506.1 475.9 520.6 476.0 505.1 476.1 498.6 476.2 498.8 476.3 503.7 476.4 509.0 476.5 503.9 476.6 503.0 476.7 511.3 476.9 487.2 477.0 492.5 477.1 513.9 477.2 507.4 477.3 482.5 477.4 501.5 477.5 486.3 477.6 509.7 477.7 480.9 477.9 503.3 478.0 495.4 478.1 499.9 478.2 493.5 478.3 494.3 478.4 487.8 478.5 509.8 478.6 505.1 478.7 504.2 478.9 499.7 479.0 496.3 479.1 504.5 479.2 487.9 479.3 494.2 479.4 498.0 479.5 493.6 479.6 490.3 479.7 501.3 479.9 499.0 480.0 494.4 480.1 485.6 480.2 496.6 480.3 494.7 480.4 503.7 480.5 495.5 480.6 498.1 480.7 506.4 480.9 491.0 481.0 507.9 481.1 499.4 481.2 506.6 481.3 511.6 481.4 501.0 481.5 497.9 481.6 502.5 481.7 511.6 481.9 493.6 482.0 501.4 482.1 509.0 482.2 511.3 482.3 518.1 482.4 512.6 482.5 497.6 482.6 491.6 482.7 485.3 482.9 492.8 483.0 495.4 483.1 491.6 483.2 507.5 483.3 505.5 483.4 508.9 483.5 521.3 483.6 505.2 483.7 488.1 483.9 500.0 484.0 514.0 484.1 511.4 484.2 499.6 484.3 517.1 484.4 519.8 484.5 524.2 484.6 493.3 484.7 524.1 484.9 514.8 485.0 509.4 485.1 514.4 485.2 516.5 485.3 515.9 485.4 508.4 485.5 511.8 485.6 520.1 485.7 509.5 485.9 532.9 486.0 517.1 486.1 517.0 486.2 516.9 486.3 514.5 486.4 519.3 486.5 524.4 486.6 523.9 486.7 529.3 486.9 530.9 487.0 524.8 487.1 531.7 487.2 522.8 487.3 537.1 487.4 530.0 487.5 517.9 487.6 529.7 487.7 534.4 487.9 529.0 488.0 559.5 488.1 539.3 488.2 536.9 488.3 519.7 488.4 544.4 488.5 526.7 488.6 534.2 488.7 527.4 488.9 519.3 489.0 531.2 489.1 532.7 489.2 528.8 489.3 529.5 489.4 519.6 489.5 510.0 489.6 517.9 489.7 520.9 489.9 524.2 490.0 503.1 490.1 501.7 490.2 515.7 490.3 507.5 490.4 517.5 490.5 511.1 490.6 524.8 490.7 519.5 490.9 508.3 491.0 514.4 491.1 524.1 491.2 519.4 491.3 522.6 491.4 512.9 491.5 521.0 491.6 504.0 491.7 537.3 491.9 534.6 492.0 516.2 492.1 528.5 492.2 527.3 492.3 485.3 492.4 499.6 492.5 512.4 492.6 524.9 492.7 503.9 492.9 532.0 493.0 519.0 493.1 516.6 493.2 527.5 493.3 499.5 493.4 517.8 493.5 514.4 493.6 489.1 493.7 517.0 493.9 488.7 494.0 505.2 494.1 488.5 494.2 510.2 494.3 501.3 494.4 509.2 494.5 518.8 494.6 513.0 494.7 530.1 494.9 521.3 495.0 526.3 495.1 502.5 495.2 504.0 495.3 515.4 495.4 514.6 495.5 518.6 495.6 511.4 495.7 505.9 495.9 515.0 496.0 520.0 496.1 513.8 496.2 503.1 496.3 508.9 496.4 495.5 496.5 512.7 496.6 500.0 496.7 511.2 496.9 498.3 497.0 484.1 497.1 512.9 497.2 502.5 497.3 504.4 497.4 478.3 497.5 502.4 497.6 492.6 497.7 499.8 497.9 521.5 498.0 512.3 498.1 492.5 498.2 507.0 498.3 497.2 498.4 484.4 498.5 500.6 498.6 488.8 498.7 499.2 498.9 484.2 499.0 484.3 499.1 490.3 499.2 525.3 499.3 482.6 499.4 494.1 499.5 510.5 499.6 507.5 499.7 508.4 499.9 513.9 500.0 514.0 500.1 512.3 500.2 510.7 500.3 479.8 500.4 483.1 500.5 500.5 500.6 500.7 500.7 531.7 500.9 507.9 501.0 496.6 501.1 495.8 501.2 508.9 501.3 500.5 501.4 495.4 501.5 498.9 501.6 502.8 501.7 491.8 501.9 509.3 502.0 484.9 502.1 488.6 502.2 495.5 502.3 519.3 502.4 508.5 502.5 493.3 502.6 512.6 502.7 504.0 502.9 493.4 503.0 505.1 503.1 501.4 503.2 483.4 503.3 514.5 503.4 491.5 503.5 489.4 503.6 486.5 503.7 506.8 503.9 507.5 504.0 508.8 504.1 504.6 504.2 506.4 504.3 492.9 504.4 503.6 504.5 506.8 504.6 497.3 504.7 494.6 504.9 481.8 505.0 502.0 505.1 488.9 505.2 494.1 505.3 491.6 505.4 494.1 505.5 485.2 505.6 496.4 505.7 496.5 505.9 497.5 506.0 483.8 506.1 486.9 506.2 499.3 506.3 498.1 506.4 491.9 506.5 488.5 506.6 492.0 506.7 491.1 506.9 495.6 507.0 502.3 507.1 502.7 507.2 480.4 507.3 498.8 507.4 489.9 507.5 491.0 507.6 498.0 507.7 492.2 507.9 493.1 508.0 484.9 508.1 480.5 508.2 494.4 508.3 485.3 508.4 488.0 508.5 482.5 508.6 493.6 508.7 497.8 508.9 490.7 509.0 497.7 509.1 494.5 509.2 496.6 509.3 491.0 509.4 480.7 509.5 494.4 509.6 495.2 509.7 494.1 509.9 495.6 510.0 482.9 510.1 480.1 510.2 469.9 510.3 481.6 510.4 489.5 510.5 486.8 510.6 470.7 510.7 458.0 510.9 472.0 511.0 480.2 511.1 477.4 511.2 484.5 511.3 485.7 511.4 489.0 511.5 493.0 511.6 485.2 511.7 487.0 511.9 490.8 512.0 500.4 512.1 494.1 512.2 497.6 512.3 498.5 512.4 505.9 512.5 509.0 512.6 493.5 512.7 504.1 512.9 497.1 513.0 482.1 513.1 506.7 513.2 484.1 513.3 488.0 513.4 500.9 513.5 507.8 513.6 495.6 513.7 508.9 513.9 521.4 514.0 515.0 514.1 505.9 514.2 499.7 514.3 512.2 514.4 514.4 514.5 531.6 514.6 513.0 514.7 514.6 514.9 522.4 515.0 515.9 515.1 521.0 515.2 519.8 515.3 522.2 515.4 504.5 515.5 526.5 515.6 512.7 515.7 508.0 515.9 498.8 516.0 511.5 516.1 517.5 516.2 534.3 516.3 512.2 516.4 497.3 516.5 497.1 516.6 518.3 516.7 513.8 516.9 502.7 517.0 496.5 517.1 526.2 517.2 502.4 517.3 517.5 517.4 520.7 517.5 495.1 517.6 516.5 517.7 508.9 517.9 525.8 518.0 513.3 518.1 510.5 518.2 509.6 518.3 516.0 518.4 516.0 518.5 528.1 518.6 525.9 518.7 509.1 518.9 536.1 519.0 528.3 519.1 515.9 519.2 552.4 519.3 520.6 519.4 524.7 519.5 522.2 519.6 539.0 519.7 533.5 519.9 525.7 520.0 552.3 520.1 533.9 520.2 524.0 520.3 532.6 520.4 542.2 520.5 538.2 520.6 499.9 520.7 527.1 520.9 527.1 521.0 543.9 521.1 554.2 521.2 528.6 521.3 529.0 521.4 552.9 521.5 562.9 521.6 558.6 521.7 553.2 521.9 534.7 522.0 536.7 522.1 556.9 522.2 558.8 522.3 552.2 M534.2 577.0 535.7 546.7 535.8 548.3 535.9 526.9 536.0 536.9 536.1 522.9 536.2 523.9 536.3 523.1 536.4 524.5 536.5 522.2 536.7 513.7 536.8 518.1 536.9 515.3 537.0 508.3 537.1 502.5 537.2 531.7 537.3 525.2 537.4 514.8 537.5 516.8 537.7 508.5 537.8 523.2 537.9 511.2 538.0 516.5 538.1 514.2 538.2 522.6 538.3 518.7 538.4 495.6 538.5 514.8 538.7 527.5 538.8 523.7 538.9 515.6 539.0 518.2 539.1 516.4 539.2 511.7 539.3 521.8 539.4 508.1 539.5 512.6 539.7 525.8 539.8 538.0 539.9 517.5 540.0 519.4 540.1 501.0 540.2 511.0 540.3 514.0 540.4 520.2 540.5 512.7 540.7 516.5 540.8 507.8 540.9 509.1 541.0 514.0 541.1 492.8 541.2 513.4 541.3 497.8 541.4 497.6 541.5 499.0 541.7 520.0 541.8 504.1 541.9 486.0 542.0 505.1 542.1 497.1 542.2 474.8 542.3 523.4 542.4 506.5 542.5 517.4 542.7 487.5 542.8 467.9 542.9 494.9 543.0 508.1 543.1 504.9 543.2 512.3 543.3 496.2 543.4 486.1 543.5 497.7 543.7 494.5 543.8 485.5 543.9 492.6 544.0 480.0 544.1 487.3 544.2 480.7 544.3 512.3 544.4 495.8 544.5 512.2 544.7 498.6 544.8 478.3 544.9 511.6 545.0 505.3 545.1 502.7 545.2 503.0 545.3 502.7 545.4 502.6 545.5 482.3 545.7 495.8 545.8 493.4 545.9 506.4 546.0 500.7 546.1 468.2 546.2 491.9 546.3 482.5 546.4 485.3 546.5 489.2 546.7 480.3 546.8 496.7 546.9 504.3 547.0 483.2 547.1 484.5 547.2 484.2 547.3 465.4 547.4 482.3 547.5 509.8 547.7 481.2 547.8 483.9 547.9 485.8 548.0 493.3 548.1 484.5 548.2 495.5 548.3 472.8 548.4 475.7 548.5 494.1 548.7 478.6 548.8 487.4 548.9 487.2 549.0 483.1 549.1 487.9 549.2 478.3 549.3 462.0 549.4 484.2 549.5 485.2 549.7 481.1 549.8 471.6 549.9 481.3 550.0 500.7 550.1 477.1 550.2 483.2 550.3 481.0 550.4 478.1 550.5 493.4 550.7 490.2 550.8 488.9 550.9 493.4 551.0 493.3 551.1 482.4 551.2 472.2 551.3 480.7 551.4 499.3 551.5 483.6 551.7 485.0 551.8 484.8 551.9 485.8 552.0 491.7 552.1 494.0 552.2 500.4 552.3 477.7 552.4 483.8 552.5 497.6 552.7 491.7 552.8 496.2 552.9 515.0 553.0 506.5 553.1 500.6 553.2 507.0 553.3 498.1 553.4 497.1 553.5 509.4 553.7 525.8 553.8 518.8 553.9 512.4 554.0 529.8 554.1 525.3 554.2 526.3 554.3 505.4 554.4 498.0 554.5 505.6 554.7 516.1 554.8 522.4 554.9 518.1 555.0 526.1 555.1 538.6 555.2 536.0 555.3 531.4 555.4 526.1 555.5 503.6 555.7 527.7 555.8 519.2 555.9 527.1 556.0 540.0 556.1 528.3 556.2 530.5 556.3 519.8 556.4 507.1 556.5 550.0 556.7 523.3 556.8 520.8 556.9 533.2 557.0 525.1 557.1 548.3 557.2 519.3 557.3 509.3 557.4 533.3 557.5 536.1 557.7 527.5 557.8 525.4 557.9 548.0 558.0 531.6 558.1 528.7 558.2 518.1 558.3 543.0 558.4 537.0 558.5 532.5 558.7 526.5 558.8 540.9 558.9 554.4 559.0 545.7 559.1 543.2 559.2 508.5 559.3 523.0 559.4 527.3 559.5 561.4 559.7 541.3 559.8 555.5 559.9 548.1 560.0 533.5 560.1 527.3 560.2 547.3 560.3 547.0 560.4 534.2 560.5 547.5 560.7 524.1 560.8 545.3 560.9 530.9 561.0 559.1 561.1 526.5 561.2 559.4 561.3 541.7 561.4 572.9 561.5 548.2 561.7 549.8 561.8 542.2 561.9 530.7 562.0 535.6 562.1 527.7 562.2 534.6 562.3 548.6 562.4 556.5 562.5 531.7 562.7 557.9 562.8 533.9 562.9 559.5 563.0 532.7 563.1 548.8 563.2 544.4 563.3 546.4 563.4 537.2 563.5 530.4 563.7 528.4 563.8 553.3 563.9 550.8 564.0 532.4 564.1 526.8 564.2 542.7 564.3 546.6 564.4 535.1 564.5 549.9 564.7 557.3 564.8 538.2 564.9 541.4 565.0 538.8 565.1 541.9 565.2 549.2 565.3 539.8 565.4 559.4 565.5 577.6 565.7 559.1 565.8 551.8 565.9 553.3 566.0 578.9 566.1 553.8 566.2 568.0 566.3 569.6 566.4 569.1 566.5 592.5 566.7 569.9 566.8 580.6 566.9 567.6 567.0 586.3 567.1 577.3 567.2 579.1 567.3 555.6 567.4 559.9 567.5 555.2 567.7 574.7 567.8 581.8 567.9 548.9 568.0 561.4 568.1 574.1 568.2 567.6 568.3 561.9 568.4 550.5 568.5 559.5 568.7 554.2 568.8 557.0 568.9 569.4 569.0 580.7 569.1 556.4 569.2 550.5 569.3 581.3 569.4 582.4 569.5 557.5 569.7 565.1 569.8 547.9 569.9 565.1 570.0 575.8 570.1 561.5 570.2 576.9 570.3 578.5 570.4 555.1 570.5 574.2 570.7 561.9 570.8 545.4 570.9 581.6 571.0 583.4 571.1 559.2 571.2 558.5 571.3 578.7 571.4 561.6 571.5 556.3 571.7 569.5 571.8 563.7 571.9 578.6 572.0 594.9 572.1 579.7 572.2 581.3 572.3 580.6 572.4 586.0 572.5 597.6 572.7 580.0 572.8 592.9 572.9 587.2 573.0 588.1 573.1 575.0 573.2 592.8 573.3 587.3 573.4 575.1 573.5 588.7 573.7 600.1 573.8 575.9 573.9 588.4 574.0 606.0 574.1 604.6 574.2 584.6 574.3 601.6 574.4 591.4 574.5 581.3 574.7 579.2 574.8 596.8 574.9 593.0 575.0 597.9 575.1 579.8 575.2 599.5 575.3 592.0 575.4 591.6 575.5 586.2 575.7 579.8 575.8 572.3 575.9 590.5 576.0 596.4 576.1 576.0 576.2 594.4 576.3 595.6 576.4 584.2 576.5 598.6 576.7 590.7 576.8 581.2 576.9 602.9 577.0 582.6 577.1 577.4 577.2 595.4 577.3 584.4 577.4 580.7 577.5 592.8 577.7 579.1 577.8 583.8 577.9 580.7 578.0 562.0 578.1 566.5 578.2 587.8 578.3 586.6 578.4 583.0 578.5 587.3 578.7 587.8 578.8 587.9 578.9 585.8 579.0 574.1 579.1 585.6 579.2 577.5 579.3 578.9 579.4 586.3 579.5 595.8 579.7 582.5 579.8 591.0 579.9 577.8 580.0 580.8 580.1 580.0 580.2 602.6 580.3 587.7 580.4 588.3 580.5 586.8 580.7 579.4 580.8 593.8 580.9 582.8 581.0 577.5 581.1 589.8 581.2 589.0 581.3 595.2 581.4 590.3 581.5 592.8 581.7 589.3 581.8 585.2 581.9 602.7 582.0 600.7 582.1 583.0 582.2 583.8 582.3 590.1 582.4 590.3 582.5 590.1 582.7 589.1 582.8 593.2 582.9 605.8 583.0 581.7 583.1 594.9 583.2 603.0 583.3 590.8 583.4 589.3 583.5 600.0 583.7 586.4 583.8 590.6 583.9 591.1 584.0 594.7 584.1 587.1 584.2 580.1 584.3 594.4 584.4 576.9 584.5 597.5 584.7 590.6 584.8 590.8 584.9 584.2 585.0 604.2 585.1 584.6 585.2 573.2 585.3 590.4 585.4 590.3 585.5 590.6 585.7 574.7 585.8 581.8 585.9 589.4 586.0 596.5 586.1 597.1 586.2 584.0 586.3 599.1 586.4 582.0 586.5 591.5 586.7 592.5 586.8 605.8 586.9 596.2 587.0 605.4 587.1 585.3 587.2 590.6 587.3 597.8 587.4 586.8 587.5 581.7 587.7 580.8 587.8 586.3 587.9 581.2 588.0 571.6 588.1 596.0 588.2 578.3 588.3 589.1 588.4 587.3 588.5 589.9 588.7 591.3 588.8 593.4 588.9 590.5 589.0 586.2 589.1 590.4 589.2 587.4 589.3 577.0 589.4 596.7 589.5 584.0 589.7 593.4 589.8 591.5 589.9 585.9 590.0 592.7 590.1 590.1 590.2 582.5 590.3 590.0 590.4 588.3 590.5 586.6 590.7 577.7 590.8 583.7 590.9 591.2 591.0 591.9 591.1 593.1 591.2 595.4 591.3 591.1 591.4 591.6 591.5 580.0 591.7 587.0 591.8 588.5 591.9 582.6 592.0 596.1 592.1 595.8 592.2 594.6 592.3 598.4 592.4 590.1 592.5 593.2 592.7 593.4 592.8 605.6 592.9 579.4 593.0 582.4 593.1 587.7 593.2 594.4 593.3 585.1 593.4 589.2 593.5 594.6 593.7 590.3 593.8 589.3 593.9 582.9 594.0 593.3 594.1 591.3 594.2 598.2 594.3 592.1 594.4 599.7 594.5 592.4 594.7 601.1 594.8 585.5 594.9 597.9 595.0 589.6 595.1 591.8 595.2 603.2 595.3 588.8 595.4 584.7 595.5 577.4 595.7 586.9 595.8 597.6 595.9 592.8 596.0 587.7 596.1 606.1 596.2 592.8 596.3 604.7 596.4 601.7 596.5 596.2 596.7 600.1 596.8 578.6 596.9 598.3 597.0 584.6 597.1 596.5 597.2 595.5 597.3 583.9 597.4 594.1 597.5 590.5 597.7 608.9 597.8 593.9 597.9 588.4 598.0 584.2 598.1 614.5 598.2 594.0 598.3 588.7 598.4 600.4 598.5 585.8 598.7 595.8 598.8 596.9 598.9 594.8 599.0 591.4 599.1 594.5 599.2 603.0 599.3 596.0 599.4 593.2 599.5 595.6 599.7 588.1 599.8 593.0 599.9 589.2 600.0 586.0 600.1 590.8 600.2 583.9 600.3 599.3 600.4 585.8 600.5 581.1 600.7 596.4 600.8 588.8 600.9 593.7 601.0 606.9 601.1 594.0 601.2 584.3 601.3 594.3 601.4 598.5 601.5 587.8 601.7 598.2 601.8 584.4 601.9 578.4 602.0 587.0 602.1 586.2 602.2 594.2 602.3 583.4 602.4 597.4 602.5 585.3 602.7 588.5 602.8 603.7 602.9 599.1 603.0 601.3 603.1 596.3 603.2 592.7 603.3 580.9 603.4 596.6 603.5 582.2 603.7 591.3 603.8 587.2 603.9 596.3 604.0 582.2 604.1 584.4 604.2 593.5 604.3 592.6 604.4 592.3 604.5 602.0 604.7 576.8 604.8 593.2 604.9 584.0 605.0 586.4 605.1 597.2 605.2 590.3 605.3 586.0 605.4 580.9 605.5 590.5 605.7 588.4 605.8 585.6 605.9 586.7 606.0 577.3 606.1 584.3 606.2 582.6 606.3 581.2 606.4 586.3 606.5 581.6 606.7 579.6 606.8 596.3 606.9 585.0 607.0 585.7 607.1 586.5 607.2 586.6 607.3 598.7 607.4 578.4 607.5 588.3 607.7 578.6 607.8 592.5 607.9 590.7 608.0 600.7 608.1 585.0 608.2 574.3 608.3 577.2 608.4 590.6 608.5 587.8 608.7 586.1 608.8 566.0 608.9 580.7 609.0 579.5 609.1 588.4 609.2 577.0 609.3 590.8 609.4 593.8 609.5 577.1 609.7 584.1 609.8 587.0 609.9 581.6 610.0 586.5 610.1 584.7 610.2 578.0 610.3 582.1 610.4 580.6 610.5 595.2 610.7 584.3 610.8 584.7 610.9 588.5 611.0 587.4 611.1 577.1 611.2 575.7 611.3 589.3 611.4 583.2 611.5 592.1 611.7 580.6 611.8 593.2 611.9 588.3 612.0 591.1 612.1 583.2 612.2 587.0 612.3 585.5 612.4 578.5 612.5 588.9 612.7 583.5 612.8 584.5 612.9 589.3 613.0 582.4 613.1 585.5 613.2 580.3 613.3 582.5 613.4 588.1 613.5 584.9 613.7 584.5 613.8 575.4 613.9 586.0 614.0 574.2 614.1 576.3 614.2 584.3 614.3 587.0 614.4 574.2 614.5 583.5 614.7 578.2 614.8 577.5 614.9 571.1 615.0 578.3 615.1 581.6 615.2 585.9 615.3 577.3 615.4 590.1 615.5 574.3 615.7 577.3 615.8 579.8 615.9 593.0 616.0 592.8 616.1 586.6 616.2 575.2 616.3 578.4 616.4 586.9 616.5 584.7 616.7 588.2 616.8 578.1 616.9 582.8 617.0 574.9 617.1 574.1 617.2 565.5 617.3 573.6 617.4 578.9 617.5 564.7 617.7 576.4 617.8 585.9 617.9 574.3 618.0 582.6 618.1 574.8 618.2 572.9 618.3 571.7 618.4 569.7 618.5 575.2 618.7 576.0 618.8 574.1 618.9 564.3 619.0 576.5 619.1 582.2 619.2 583.6 619.3 578.0 619.4 581.7 619.5 584.0 619.7 576.9 619.8 568.7 619.9 563.9 620.0 578.7 620.1 579.2 620.2 585.1 620.3 587.8 620.4 577.1 620.5 582.4 620.7 579.9 620.8 569.7 620.9 582.5 621.0 588.5 621.1 573.2 621.2 575.3 621.3 574.5 621.4 573.4 621.5 589.5 621.7 582.8 621.8 582.7 621.9 574.6 622.0 579.6 622.1 580.7 622.2 578.3 622.3 575.0 622.4 569.4 622.5 571.4 622.7 576.7 622.8 577.3 622.9 575.0 623.0 567.5 623.1 577.3 623.2 570.9 623.3 587.5 623.4 564.0 623.5 567.2 623.7 565.2 623.8 568.6 623.9 575.1 624.0 574.8 624.1 567.5 624.2 568.4 624.3 562.3 624.4 576.8 624.5 569.7 624.7 579.0 624.8 579.7 624.9 572.3 625.0 570.7 625.1 575.3 625.2 567.0 625.3 559.6 625.4 567.3 625.5 562.6 625.7 575.5 625.8 557.8 625.9 568.6 626.0 573.4 626.1 572.8 626.2 573.1 626.3 566.9 626.4 581.4 626.5 573.2 626.7 574.1 626.8 574.5 626.9 562.4 627.0 572.4 627.1 569.1 627.2 565.4 627.3 570.0 627.4 575.4 627.5 568.5 627.7 568.4 627.8 563.7 627.9 567.0 628.0 561.1 628.1 574.5 628.2 567.3 628.3 566.3 628.4 565.2 628.5 569.8 628.7 566.7 628.8 565.7 628.9 562.9 629.0 561.7 629.1 573.0 629.2 568.8 629.3 566.4 629.4 566.7 629.5 565.1 629.7 561.8 629.8 560.8 629.9 561.2 630.0 567.4 630.1 564.4 630.2 559.4 630.3 565.7 630.4 562.5 630.5 566.1 630.7 566.5 630.8 564.0 630.9 563.3 631.0 569.6 631.1 568.7 631.2 562.2 631.3 560.4 631.4 559.5 631.5 560.5 631.7 551.2 631.8 558.6 631.9 554.0 632.0 559.6 632.1 566.2 632.2 564.0 632.3 543.4 632.4 550.3 632.5 558.0 632.7 558.6 632.8 560.7 632.9 554.3 633.0 559.9 633.1 549.8 633.2 547.7 633.3 555.4 633.4 552.1 633.5 556.5 633.7 553.2 633.8 556.8 633.9 555.0 634.0 556.9 634.1 551.5 634.2 548.8 634.3 551.1 634.4 558.8 634.5 557.7 634.7 558.3 634.8 562.3 634.9 552.0 635.0 559.7 635.1 555.5 635.2 548.9 635.3 554.9 635.4 560.6 635.5 558.3 635.7 554.4 635.8 549.5 635.9 552.6 636.0 553.2 636.1 560.1 636.2 544.0 636.3 552.0 636.4 546.9 636.5 541.2 636.7 547.5 636.8 546.1 636.9 543.4 637.0 548.8 637.1 538.3 637.2 545.6 637.3 549.3 637.4 544.6 637.5 543.9 637.7 540.7 637.8 532.5 637.9 542.0 638.0 543.5 638.1 538.9 638.2 541.3 638.3 546.4 638.4 527.5 638.5 537.7 638.7 524.1 638.8 521.5 638.9 540.6 639.0 531.0 639.1 542.7 639.2 514.0 639.3 544.0 639.4 538.1 639.5 518.8 639.7 525.8 639.8 529.4 639.9 553.1 640.0 522.9 640.1 515.0 640.2 520.1 640.3 559.6 640.4 554.2 640.5 525.2 640.7 542.2 640.8 568.6 640.9 560.2 641.0 528.6 641.1 555.1 641.2 549.4 641.3 557.0 641.4 555.9 641.5 566.8 641.7 554.1 641.8 552.5 641.9 562.5 642.0 564.5 642.1 553.1 642.2 556.2 642.3 538.2 642.4 543.7 642.5 545.1 642.7 583.6 642.8 578.1 642.9 564.8 643.0 548.5 643.1 553.8 643.2 556.5 643.3 546.7 643.4 575.9 643.5 566.3 643.7 564.2 643.8 581.3 643.9 561.4 644.0 557.9 644.1 559.9 644.2 561.4 644.3 559.1 644.4 580.3 644.5 566.4 644.7 576.4 644.8 558.5 644.9 564.8 645.0 567.0 645.1 574.0 645.2 558.7 645.3 553.8 645.4 548.2 645.5 565.2 645.7 555.9 645.8 568.3 645.9 556.9 646.0 564.9 646.1 565.0 646.2 557.0 646.3 558.1 646.4 562.3 646.5 562.8 646.7 562.7 646.8 547.2 646.9 589.0 647.0 561.1 647.1 548.3 647.2 571.8 647.3 585.7 647.4 573.8 647.5 570.0 647.7 573.7 647.8 571.6 647.9 574.6 648.0 554.3 648.1 560.0 648.2 546.9 648.3 569.4 648.4 582.7 648.5 592.0 648.7 571.2 648.8 554.1 648.9 540.4 649.0 560.2 649.1 590.6 649.2 581.4 649.3 578.1 649.4 585.3 649.5 566.6 649.7 560.9 649.8 581.2 649.9 588.5 650.0 562.4 650.1 567.8 650.2 552.8 650.3 570.6 650.4 580.3 650.5 581.3 650.7 568.5 650.8 573.0 650.9 572.7 651.0 563.8 651.1 581.8 651.2 584.7 651.3 573.9 651.4 579.4 651.5 568.4 651.7 581.0 651.8 570.7 651.9 571.2 652.0 543.2 652.1 564.3 652.2 577.6 652.3 570.7 652.4 563.7 652.5 573.4 652.7 566.1 652.8 572.0 652.9 581.8 653.0 576.3 653.1 574.9 653.2 564.1 653.3 571.9 653.4 568.1 653.5 562.3 653.7 577.5 653.8 567.8 653.9 577.5 654.0 579.7 654.1 565.9 654.2 581.6 654.3 569.4 654.4 582.6 654.5 573.5 654.7 573.3 654.8 582.0 654.9 568.7 655.0 592.0 655.1 571.1 655.2 572.5 655.3 572.8 655.4 557.6 655.5 570.1 655.7 568.6 655.8 563.4 655.9 568.7 656.0 563.9 656.1 578.7 656.2 570.1 656.3 567.2 656.4 563.7 656.5 576.8 656.7 571.7 656.8 568.7 656.9 550.6 657.0 578.1 657.1 576.5 657.2 562.7 657.3 575.6 657.4 569.5 657.5 549.1 657.7 550.8 657.8 569.2 657.9 537.6 658.0 569.3 658.1 550.0 658.2 543.3 658.3 535.1 658.4 558.4 658.5 551.2 658.7 540.0 658.8 540.5 658.9 569.3 659.0 546.0 659.1 562.6 659.2 548.5 659.3 546.7 659.4 556.7 659.5 549.7 659.7 563.3 659.8 567.7 659.9 559.6 660.0 553.9 660.1 557.7 660.2 529.6 660.3 571.5 660.4 542.2 660.5 555.6 660.7 553.0 660.8 554.5 660.9 563.9 661.0 552.5 661.1 553.9 661.2 558.4 661.3 540.1 661.4 544.5 661.5 545.3 661.7 550.2 661.8 535.0 661.9 543.6 662.0 535.0 662.1 521.5 662.2 538.5 662.3 542.2 662.4 531.1 662.5 531.7 662.7 538.0 662.8 529.8 662.9 543.2 663.0 549.0 663.1 530.2 663.2 536.3 663.3 534.8 663.4 536.9 663.5 545.6 663.7 540.9 663.8 528.2 663.9 545.3 664.0 534.8 664.1 544.7 664.2 523.6 664.3 554.8 664.4 536.3 664.5 536.8 664.7 539.8 664.8 536.8 664.9 523.0 665.0 534.5 665.1 538.2 665.2 537.2 665.3 531.3 665.4 506.1 665.5 531.8 665.7 551.2 665.8 555.5 665.9 540.1 666.0 528.4 666.1 526.6 666.2 537.0 666.3 540.1 666.4 548.8 666.5 527.8 666.7 523.8 666.8 504.8 666.9 501.1 667.0 538.2 667.1 536.7 667.2 527.9 667.3 519.3 667.4 510.2 667.5 522.5 667.7 524.0 667.8 516.7 667.9 511.1 668.0 514.7 668.1 515.1 668.2 515.0 668.3 518.5 668.4 509.1 668.5 512.3 668.7 509.0 668.8 503.4 668.9 516.4 669.0 530.3 669.1 503.3 669.4 512.0 669.6 486.8 669.9 527.0" fill="none" stroke="#000" stroke-width="1" stroke-linejoin="round"/>
<g fill="#161616">
<text x="316.40" y="187.00" font-size="16" textLength="126.00" lengthAdjust="spacingAndGlyphs">RBSP-A/EMFISIS</text>
<text x="452.40" y="187.00" font-size="16" textLength="32.70" lengthAdjust="spacingAndGlyphs">HFR</text>
<text x="489.90" y="187.00" font-size="16" textLength="60.20" lengthAdjust="spacingAndGlyphs">Spectra</text>
<text x="554.50" y="187.00" font-size="16" textLength="36.60" lengthAdjust="spacingAndGlyphs">Data</text>
<text x="294.40" y="414.00" font-size="16" textLength="158.20" lengthAdjust="spacingAndGlyphs">RBSP-A/ect-hope-L3</text>
<text x="462.00" y="414.00" font-size="16" textLength="45.10" lengthAdjust="spacingAndGlyphs">HOPE</text>
<text x="512.80" y="414.00" font-size="16" textLength="9.00" lengthAdjust="spacingAndGlyphs">e</text>
<text x="526.30" y="414.00" font-size="16" textLength="84.50" lengthAdjust="spacingAndGlyphs">Tperp/Tpar</text>
<text x="173.80" y="282.80" font-size="16" textLength="18.90" lengthAdjust="spacingAndGlyphs">10</text>
<text x="192.30" y="274.80" font-size="16" textLength="11.40" lengthAdjust="spacingAndGlyphs">5</text>
<text x="173.80" y="384.30" font-size="16" textLength="18.90" lengthAdjust="spacingAndGlyphs">10</text>
<text x="192.30" y="376.30" font-size="16" textLength="11.40" lengthAdjust="spacingAndGlyphs">4</text>
<text transform="translate(161.00,287.60) rotate(-90)" x="-10.95" y="0" font-size="16" textLength="21.90" lengthAdjust="spacingAndGlyphs">Hz</text>
<text x="737.00" y="227.10" font-size="16" textLength="18.90" lengthAdjust="spacingAndGlyphs">10</text>
<text x="756.00" y="219.10" font-size="16" textLength="25.80" lengthAdjust="spacingAndGlyphs">-10</text>
<text x="737.00" y="254.10" font-size="16" textLength="18.90" lengthAdjust="spacingAndGlyphs">10</text>
<text x="756.00" y="246.10" font-size="16" textLength="25.80" lengthAdjust="spacingAndGlyphs">-12</text>
<text x="737.00" y="280.10" font-size="16" textLength="18.90" lengthAdjust="spacingAndGlyphs">10</text>
<text x="756.00" y="272.10" font-size="16" textLength="25.80" lengthAdjust="spacingAndGlyphs">-14</text>
<text x="737.00" y="307.10" font-size="16" textLength="18.90" lengthAdjust="spacingAndGlyphs">10</text>
<text x="756.00" y="299.10" font-size="16" textLength="25.80" lengthAdjust="spacingAndGlyphs">-16</text>
<text x="737.00" y="333.10" font-size="16" textLength="18.90" lengthAdjust="spacingAndGlyphs">10</text>
<text x="756.00" y="325.10" font-size="16" textLength="25.80" lengthAdjust="spacingAndGlyphs">-18</text>
<text x="737.00" y="360.10" font-size="16" textLength="18.90" lengthAdjust="spacingAndGlyphs">10</text>
<text x="756.00" y="352.10" font-size="16" textLength="25.80" lengthAdjust="spacingAndGlyphs">-20</text>
<text x="737.00" y="387.10" font-size="16" textLength="18.90" lengthAdjust="spacingAndGlyphs">10</text>
<text x="756.00" y="379.10" font-size="16" textLength="25.80" lengthAdjust="spacingAndGlyphs">-22</text>
<text transform="translate(806.20,287.70) rotate(-90)" x="-52.05" y="0" font-size="16" textLength="104.10" lengthAdjust="spacingAndGlyphs">V^2/m^2/Hz</text>
<text x="215.80" y="408.60" font-size="16" textLength="45.30" lengthAdjust="spacingAndGlyphs">00:00</text>
<text x="215.80" y="424.60" font-size="16" textLength="91.50" lengthAdjust="spacingAndGlyphs">2012-12-02</text>
<text x="432.50" y="408.60" font-size="16" textLength="44.70" lengthAdjust="spacingAndGlyphs">12:00</text>
<text x="647.70" y="408.60" font-size="16" textLength="45.00" lengthAdjust="spacingAndGlyphs">00:00</text>
<text x="647.70" y="424.60" font-size="16" textLength="91.80" lengthAdjust="spacingAndGlyphs">2012-12-03</text>
<text x="177.90" y="457.30" font-size="16" textLength="24.90" lengthAdjust="spacingAndGlyphs">2.2</text>
<text x="177.90" y="481.30" font-size="16" textLength="24.90" lengthAdjust="spacingAndGlyphs">2.0</text>
<text x="179.40" y="506.30" font-size="16" textLength="23.40" lengthAdjust="spacingAndGlyphs">1.8</text>
<text x="179.40" y="535.30" font-size="16" textLength="23.40" lengthAdjust="spacingAndGlyphs">1.6</text>
<text x="179.40" y="568.30" font-size="16" textLength="23.40" lengthAdjust="spacingAndGlyphs">1.4</text>
<text x="179.40" y="605.30" font-size="16" textLength="23.40" lengthAdjust="spacingAndGlyphs">1.2</text>
<text transform="translate(164.60,531.20) rotate(-90)" x="-49.30" y="0" font-size="16" textLength="98.60" lengthAdjust="spacingAndGlyphs">e Tperp/Tpar</text>
<text x="215.50" y="652.70" font-size="16" textLength="45.60" lengthAdjust="spacingAndGlyphs">00:00</text>
<text x="215.50" y="672.70" font-size="16" textLength="45.60" lengthAdjust="spacingAndGlyphs">4.225</text>
<text x="199.80" y="692.70" font-size="16" textLength="61.30" lengthAdjust="spacingAndGlyphs">-10.580</text>
<text x="215.50" y="712.70" font-size="16" textLength="45.60" lengthAdjust="spacingAndGlyphs">2.247</text>
<text x="215.50" y="732.70" font-size="16" textLength="45.60" lengthAdjust="spacingAndGlyphs">4.373</text>
<text x="433.00" y="652.70" font-size="16" textLength="44.40" lengthAdjust="spacingAndGlyphs">12:00</text>
<text x="431.80" y="672.70" font-size="16" textLength="45.60" lengthAdjust="spacingAndGlyphs">5.756</text>
<text x="426.10" y="692.70" font-size="16" textLength="51.30" lengthAdjust="spacingAndGlyphs">-1.544</text>
<text x="431.80" y="712.70" font-size="16" textLength="45.60" lengthAdjust="spacingAndGlyphs">5.398</text>
<text x="431.80" y="732.70" font-size="16" textLength="45.60" lengthAdjust="spacingAndGlyphs">5.760</text>
<text x="647.30" y="652.70" font-size="16" textLength="45.60" lengthAdjust="spacingAndGlyphs">00:00</text>
<text x="647.30" y="672.70" font-size="16" textLength="45.60" lengthAdjust="spacingAndGlyphs">3.179</text>
<text x="631.60" y="692.70" font-size="16" textLength="61.30" lengthAdjust="spacingAndGlyphs">-16.190</text>
<text x="647.30" y="712.70" font-size="16" textLength="45.60" lengthAdjust="spacingAndGlyphs">8.125</text>
<text x="647.30" y="732.70" font-size="16" textLength="45.60" lengthAdjust="spacingAndGlyphs">3.447</text>
<text x="156.70" y="672.70" font-size="16" textLength="12.00" lengthAdjust="spacingAndGlyphs">R</text>
<text x="168.10" y="678.10" font-size="10.2" textLength="6.60" lengthAdjust="spacingAndGlyphs" stroke="#000" stroke-width="0.35">E</text>
<text x="137.70" y="692.70" font-size="16" textLength="37.20" lengthAdjust="spacingAndGlyphs">MLat</text>
<text x="143.60" y="712.70" font-size="16" textLength="31.30" lengthAdjust="spacingAndGlyphs">MLT</text>
<text x="166.30" y="732.70" font-size="16" textLength="8.60" lengthAdjust="spacingAndGlyphs">L</text>
<text x="251.60" y="757.00" font-size="16" textLength="404.40" lengthAdjust="spacingAndGlyphs">2012-12-01 (336) 23:00 to 2012-12-03 (338) 01:00</text>
</g>
</svg>
<svg width="1345" height="916" viewBox="0 0 1345 916"><defs><linearGradient id="cg" x1="0" y1="0" x2="1" y2="1"><stop offset="0" stop-color="#ffffff"/><stop offset="0.55" stop-color="#f6f6f6"/><stop offset="1" stop-color="#d0d0d0"/></linearGradient></defs><path d="M427.8 56.2 L428.4 83.0 L437.2 78.8 L447.4 98.7 L455.0 94.6 L445.3 75.7 L452.8 71.3 Z" fill="url(#cg)" stroke="#0a0a0a" stroke-width="3.7" stroke-linejoin="round"/><ellipse cx="432.6" cy="70.6" rx="0.9" ry="1.7" fill="#111" transform="rotate(-15 432.6 70.6)"/></svg>
</body></html>
